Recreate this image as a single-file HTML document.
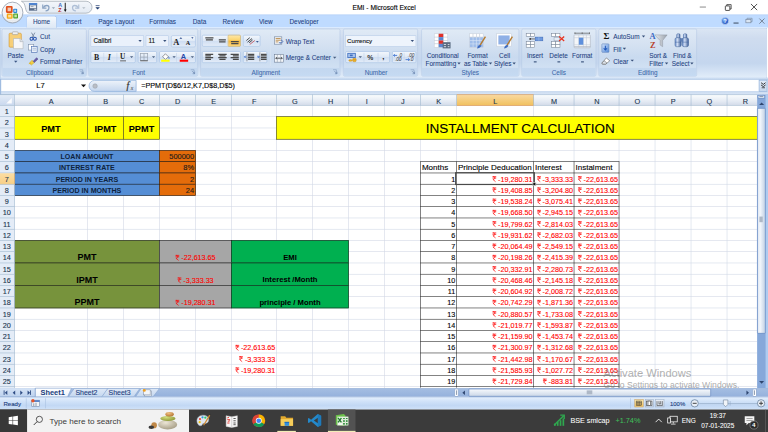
<!DOCTYPE html><html><head><meta charset="utf-8"><style>
html,body{margin:0;padding:0;width:768px;height:432px;overflow:hidden;background:#fff}
#root{position:absolute;left:0;top:0;width:1366px;height:768px;transform:scale(0.5625);transform-origin:0 0;overflow:hidden;font-family:"Liberation Sans",sans-serif;background:#fff}
#root div{position:absolute;box-sizing:border-box;white-space:nowrap;-webkit-text-stroke:0.2px currentColor}
#root svg{position:absolute;overflow:visible}
#root div[style*="bold"]{-webkit-text-stroke:0.05px currentColor}
.rl{font-size:11.4px;color:#1e3e80;-webkit-text-stroke:0.12px currentColor!important}
.tab{-webkit-text-stroke:0.12px currentColor!important;font-size:11.4px;color:#1e3e80;top:32px;height:16px;line-height:16px}
.grp{border:1px solid #b6cae6;border-radius:3px;background:linear-gradient(#e0eaf6 0%,#d4e1f1 35%,#c9daef 60%,#d6e5f6 100%)}
.glab{-webkit-text-stroke:0.12px currentColor!important;font-size:11.4px;color:#3e6aaa;text-align:center;height:16px;line-height:16px}
.gband{background:linear-gradient(#c3d7ef,#c5daf2);border-top:1px solid #c9dcf2}
.cell{font-size:14.3px;color:#000;height:20px;line-height:20px}
.rs{position:relative!important;display:inline-block;width:8.1px;height:10px;vertical-align:-0.3px;margin-right:3.2px}
.red{color:#ff0000;font-size:13.7px!important;transform:scaleX(0.934);transform-origin:100% 50%}
.sx{font-size:13.7px!important;transform:scaleX(0.934);transform-origin:100% 50%}
.btn{border:1px solid #aac4e6;border-radius:3px;background:linear-gradient(#f3f7fc,#dde8f6 50%,#d0def2 51%,#e3ecf8)}
.combo{border:1px solid #b3c9e6;background:#eaf1fb}
</style></head><body><div id="root">
<div style="left:0px;top:0px;width:1366px;height:26px;background:#fff"></div>
<div style="left:583px;top:5px;width:200px;height:17px;line-height:17px;text-align:center;font-size:11.9px;color:#000;">EMI - Microsoft Excel</div>
<div style="left:1244px;top:12px;width:11px;height:1px;background:#333"></div>
<svg style="left:1288px;top:6px" width="16" height="16"><rect x="1.5" y="4.5" width="8" height="8" rx="1" fill="none" stroke="#222" stroke-width="1.4"/><path d="M4 4.5V2.2H11.8V10H9.5" fill="none" stroke="#222" stroke-width="1.3"/></svg>
<svg style="left:1334px;top:6px" width="14" height="14"><path d="M1 1L12 12M12 1L1 12" stroke="#222" stroke-width="1.4"/></svg>
<div style="left:0px;top:26px;width:1366px;height:23px;background:#bfdbff;border-top:1px solid #b3d0f5"></div>
<svg style="left:0px;top:0px" width="190" height="30"><defs><linearGradient id="qg" x1="0" y1="0" x2="0" y2="1"><stop offset="0" stop-color="#f3f6fa"/><stop offset="1" stop-color="#e3eaf3"/></linearGradient></defs><path d="M38 2.2H153A10.6 10.6 0 0 1 153 23.4H52C48 23.4 46 19 45 13C44 7 42 4 38 2.2Z" fill="url(#qg)" stroke="#9ea6b0" stroke-width="1.3"/></svg>
<svg style="left:51px;top:5px" width="16" height="16"><rect x="0.5" y="0.5" width="14.5" height="13.5" fill="#5c6f8c"/><rect x="0.5" y="0.5" width="14.5" height="3.2" fill="#4f86d6"/><rect x="2.2" y="4.5" width="11" height="5" fill="#e9edf2"/><rect x="3.5" y="6" width="5" height="1.2" fill="#7b8797"/><rect x="10" y="10.5" width="3.5" height="2.5" fill="#c5ccd6"/></svg>
<svg style="left:72px;top:4px" width="30" height="18"><path d="M4 4V10.5H10.5" fill="none" stroke="#8aa2c2" stroke-width="2"/><path d="M5 9.5C8 4.5 15 4.5 15 9.5C15 13.5 12 15.5 9 15.5" fill="none" stroke="#8aa2c2" stroke-width="2.3"/><path d="M20 9L23 12L26 9Z" fill="#9aa8b8"/></svg>
<svg style="left:103px;top:3px" width="18" height="22"><text x="0.5" y="9.5" font-family="Liberation Sans" font-weight="bold" font-size="9.5" fill="#3a6ac0">A</text><text x="0.5" y="19" font-family="Liberation Sans" font-weight="bold" font-size="9.5" fill="#c02a2a">Z</text><path d="M13 2V15" stroke="#222" stroke-width="1.8"/><path d="M10.5 14L13 18.5L15.5 14Z" fill="#111"/></svg>
<svg style="left:126px;top:4px" width="30" height="18"><path d="M14 4V10.5H7.5" fill="none" stroke="#aebfd6" stroke-width="2"/><path d="M13 9.5C10 4.5 3 4.5 3 9.5C3 13.5 6 15.5 9 15.5" fill="none" stroke="#aebfd6" stroke-width="2.3"/><path d="M20 9L23 12L26 9Z" fill="#b3bcc6"/></svg>
<svg style="left:168px;top:8px" width="12" height="12"><path d="M2 2H9" stroke="#1e3a6e" stroke-width="1.3"/><path d="M1.5 5L5.5 9L9.5 5Z" fill="#1e3a6e"/></svg>
<svg style="left:0px;top:0px" width="48" height="48"><defs><radialGradient id="ob" cx="50%" cy="40%" r="60%"><stop offset="0" stop-color="#ffffff"/><stop offset="0.75" stop-color="#eef1f5"/><stop offset="1" stop-color="#c3cad4"/></radialGradient></defs>
<circle cx="22.2" cy="22.4" r="18.6" fill="url(#ob)" stroke="#a0a9b5" stroke-width="1.6"/>
<circle cx="22.2" cy="22.4" r="16.2" fill="none" stroke="#ffffff" stroke-width="1.2" opacity="0.8"/>
<rect x="10.5" y="10.5" width="12" height="12.5" rx="2" fill="#e0501c"/><rect x="13.5" y="13.5" width="6" height="6.5" fill="#f3c9b4"/>
<rect x="23.5" y="15.5" width="7" height="7.5" rx="1.5" fill="#2d86d6"/><rect x="25.3" y="17.3" width="3.4" height="3.8" fill="#b9dcf7"/>
<rect x="12" y="24" width="10.5" height="9.5" rx="2" fill="#f5a816"/><rect x="14.5" y="26.5" width="5.5" height="4.5" fill="#fde0a0"/>
<rect x="23.5" y="24" width="8.5" height="8.7" rx="1.5" fill="#4fa22c"/><rect x="25.5" y="26" width="4.5" height="4.7" fill="#c4e6a8"/></svg>
<div style="left:47px;top:28px;width:54px;height:22px;border:1.2px solid #a2bce2;border-bottom:none;border-radius:4px 4px 0 0;background:linear-gradient(#f7fafd,#e9f0f9 50%,#dde8f5)"></div>
<div class="tab" style="left:23.8px;top:31.3px;width:100px;height:16px;line-height:16px;text-align:center;">Home</div>
<div class="tab" style="left:80.8px;top:31.3px;width:100px;height:16px;line-height:16px;text-align:center;">Insert</div>
<div class="tab" style="left:156.6px;top:31.3px;width:100px;height:16px;line-height:16px;text-align:center;">Page Layout</div>
<div class="tab" style="left:239.3px;top:31.3px;width:100px;height:16px;line-height:16px;text-align:center;">Formulas</div>
<div class="tab" style="left:304.7px;top:31.3px;width:100px;height:16px;line-height:16px;text-align:center;">Data</div>
<div class="tab" style="left:364.2px;top:31.3px;width:100px;height:16px;line-height:16px;text-align:center;">Review</div>
<div class="tab" style="left:422.5px;top:31.3px;width:100px;height:16px;line-height:16px;text-align:center;">View</div>
<div class="tab" style="left:490.6px;top:31.3px;width:100px;height:16px;line-height:16px;text-align:center;">Developer</div>
<svg style="left:1281px;top:29px" width="16" height="16"><defs><radialGradient id="hg" cx="40%" cy="35%" r="60%"><stop offset="0" stop-color="#8fc3ff"/><stop offset="1" stop-color="#1c4fc0"/></radialGradient></defs><circle cx="8" cy="8" r="6.5" fill="url(#hg)" stroke="#cfe0f5" stroke-width="1.2"/><text x="5" y="11.5" font-family="Liberation Sans" font-weight="bold" font-size="9" fill="#fff">?</text></svg>
<div style="left:1304px;top:40px;width:9px;height:2px;background:#4a5a70"></div>
<svg style="left:1325px;top:31px" width="14" height="12"><rect x="1" y="3.5" width="9" height="6" fill="#d9e5f3" stroke="#7b8aa0" stroke-width="1.2"/><path d="M3 3.5V1.5H12V7.5H10" fill="none" stroke="#7b8aa0" stroke-width="1.2"/></svg>
<svg style="left:1349px;top:32px" width="12" height="12"><path d="M1 1L10 10M10 1L1 10" stroke="#6d7a8c" stroke-width="1.6"/></svg>
<div style="left:0px;top:49px;width:1364px;height:91px;border:1px solid #a3bfe3;border-bottom:1.5px solid #8badd9;border-radius:3px;background:linear-gradient(#dbe6f4 0%,#cfdcef 20%,#c4d6ee 70%,#e3eefa 100%)"></div>
<div class="grp" style="left:3px;top:51px;width:151px;height:85px"></div>
<div class="gband" style="left:4px;top:120px;width:149px;height:15px;border-radius:0 0 2px 2px"></div>
<div class="glab" style="left:3px;top:121px;width:135px;">Clipboard</div>
<svg style="left:140px;top:123px" width="10" height="10"><path d="M1 1H7V7" fill="none" stroke="#7d97bd" stroke-width="1"/><path d="M3.5 3.5L8 8M8 4.5V8H4.5" fill="none" stroke="#5b78a4" stroke-width="1"/></svg>
<div class="grp" style="left:157px;top:51px;width:195px;height:85px"></div>
<div class="gband" style="left:158px;top:120px;width:193px;height:15px;border-radius:0 0 2px 2px"></div>
<div class="glab" style="left:157px;top:121px;width:179px;">Font</div>
<svg style="left:338px;top:123px" width="10" height="10"><path d="M1 1H7V7" fill="none" stroke="#7d97bd" stroke-width="1"/><path d="M3.5 3.5L8 8M8 4.5V8H4.5" fill="none" stroke="#5b78a4" stroke-width="1"/></svg>
<div class="grp" style="left:356px;top:51px;width:249px;height:85px"></div>
<div class="gband" style="left:357px;top:120px;width:247px;height:15px;border-radius:0 0 2px 2px"></div>
<div class="glab" style="left:356px;top:121px;width:233px;">Alignment</div>
<svg style="left:591px;top:123px" width="10" height="10"><path d="M1 1H7V7" fill="none" stroke="#7d97bd" stroke-width="1"/><path d="M3.5 3.5L8 8M8 4.5V8H4.5" fill="none" stroke="#5b78a4" stroke-width="1"/></svg>
<div class="grp" style="left:610px;top:51px;width:133px;height:85px"></div>
<div class="gband" style="left:611px;top:120px;width:131px;height:15px;border-radius:0 0 2px 2px"></div>
<div class="glab" style="left:610px;top:121px;width:117px;">Number</div>
<svg style="left:729px;top:123px" width="10" height="10"><path d="M1 1H7V7" fill="none" stroke="#7d97bd" stroke-width="1"/><path d="M3.5 3.5L8 8M8 4.5V8H4.5" fill="none" stroke="#5b78a4" stroke-width="1"/></svg>
<div class="grp" style="left:749px;top:51px;width:174px;height:85px"></div>
<div class="gband" style="left:750px;top:120px;width:172px;height:15px;border-radius:0 0 2px 2px"></div>
<div class="glab" style="left:749px;top:121px;width:174px;">Styles</div>
<div class="grp" style="left:927px;top:51px;width:133px;height:85px"></div>
<div class="gband" style="left:928px;top:120px;width:131px;height:15px;border-radius:0 0 2px 2px"></div>
<div class="glab" style="left:927px;top:121px;width:133px;">Cells</div>
<div class="grp" style="left:1064px;top:51px;width:175px;height:85px"></div>
<div class="gband" style="left:1065px;top:120px;width:173px;height:15px;border-radius:0 0 2px 2px"></div>
<div class="glab" style="left:1064px;top:121px;width:175px;">Editing</div>
<svg style="left:14px;top:55px" width="32" height="34"><rect x="2" y="4" width="22" height="25" rx="2" fill="#f2c464" stroke="#d29a3a"/><rect x="3.5" y="5.5" width="19" height="22" fill="#f7cf78"/><rect x="8" y="1.5" width="10" height="5" rx="1.2" fill="#f0f0f0" stroke="#9a9a9a"/>
<path d="M10 13.5H21.5L27 19V31.5H10Z" fill="#f6f7f9" stroke="#a9b0b8"/><path d="M21.5 13.5V19H27" fill="#dde1e6" stroke="#a9b0b8"/></svg>
<div class="rl" style="left:10px;top:91px;width:36px;height:16px;line-height:16px;text-align:center;">Paste</div>
<svg style="left:25px;top:108px" width="8" height="5"><path d="M0 0H6L3 3.5Z" fill="#3b5584"/></svg>
<svg style="left:52px;top:57px" width="14" height="16"><path d="M4 1L9 10M10 1L5 10" stroke="#6a7a92" stroke-width="1.4"/><circle cx="4" cy="12" r="2.6" fill="none" stroke="#2a56b0" stroke-width="1.8"/><circle cx="10" cy="12" r="2.6" fill="none" stroke="#2a56b0" stroke-width="1.8"/></svg>
<div class="rl" style="left:71px;top:57px;height:16px;line-height:16px;">Cut</div>
<svg style="left:50px;top:78px" width="18" height="16"><rect x="1" y="1" width="9" height="10" fill="#fff" stroke="#7a8ca6"/><rect x="6" y="5" width="10" height="10" fill="#e9f0fa" stroke="#3f63a8"/><path d="M8 8H14M8 11H14" stroke="#8fa6c8"/></svg>
<div class="rl" style="left:71px;top:80px;height:16px;line-height:16px;">Copy</div>
<svg style="left:50px;top:99px" width="20" height="18"><path d="M2 13.5L7 8L11 12L6 16.5Z" fill="#f2d04a" stroke="#b89a20" stroke-width="0.8"/><path d="M1 15L4 11.5L6.5 14Z" fill="#e8b820"/><path d="M9 10L15 3.5L17.5 6L11 12Z" fill="#6a5aa8" stroke="#3f3478" stroke-width="0.8"/></svg>
<div class="rl" style="left:71px;top:102px;height:16px;line-height:16px;">Format Painter</div>
<div class="combo" style="left:161px;top:63px;width:95px;height:20px"></div>
<div style="left:166px;top:65px;height:16px;line-height:16px;font-size:11.4px;color:#111">Calibri</div>
<svg style="left:246px;top:71px" width="7" height="5"><path d="M0 0H6L3 3.5Z" fill="#38507a"/></svg>
<div class="combo" style="left:259px;top:63px;width:41px;height:20px"></div>
<div style="left:264px;top:65px;height:16px;line-height:16px;font-size:11.4px;color:#111">11</div>
<svg style="left:290px;top:71px" width="7" height="5"><path d="M0 0H6L3 3.5Z" fill="#38507a"/></svg>
<div class="btn" style="left:304px;top:63px;width:44px;height:21px"></div>
<svg style="left:304px;top:63px" width="44" height="21"><text x="4" y="17" font-family="Liberation Serif" font-weight="bold" font-size="15" fill="#222">A</text><path d="M15 6L17.5 3L20 6Z" fill="#2a4a8a"/><text x="26" y="17" font-family="Liberation Serif" font-weight="bold" font-size="11" fill="#222">A</text><path d="M36 3H40L38 6Z" fill="#2a4a8a"/></svg>
<div class="btn" style="left:161px;top:91px;width:80px;height:21px"></div>
<svg style="left:161px;top:91px" width="80" height="21"><text x="6" y="15.5" font-family="Liberation Serif" font-weight="bold" font-size="14" fill="#222">B</text><text x="30.5" y="15.5" font-family="Liberation Serif" font-style="italic" font-weight="bold" font-size="14" fill="#222">I</text><text x="52.5" y="14.5" font-family="Liberation Serif" font-weight="bold" font-size="13" fill="#222">U</text><path d="M52.5 17.2H63" stroke="#222" stroke-width="1.2"/><path d="M70 9H76L73 12Z" fill="#4a5f80"/><path d="M23.4 3V19M46.8 3V19" stroke="#c2d3ea"/></svg>
<div class="btn" style="left:245px;top:91px;width:34px;height:21px"></div>
<svg style="left:245px;top:91px" width="34" height="21"><rect x="4.5" y="4" width="13" height="13" fill="none" stroke="#9aa4b2" stroke-width="1.3"/><path d="M11 4V17M4.5 10.5H17.5" stroke="#9aa4b2" stroke-width="1.3"/><path d="M4.5 17H17.5" stroke="#555" stroke-width="1.5"/><path d="M25 9H31L28 12Z" fill="#4a5f80"/></svg>
<div class="btn" style="left:283px;top:91px;width:65px;height:21px"></div>
<svg style="left:283px;top:91px" width="65" height="21"><path d="M6 10L11 4.5L16.5 10L11 14.5Z" fill="#fff" stroke="#555" stroke-width="1"/><path d="M16.5 10C18.5 11.5 18.5 13 17 13.5" fill="#4a77c5" stroke="#4a77c5"/><rect x="3.5" y="15" width="15" height="3.8" fill="#ffff00"/><path d="M23.5 9H29.5L26.5 12Z" fill="#4a5f80"/><text x="38.5" y="14.5" font-family="Liberation Sans" font-weight="bold" font-size="13" fill="#2645a8">A</text><rect x="36.5" y="15" width="15" height="3.8" fill="#ff0000"/><path d="M56 9H62L59 12Z" fill="#4a5f80"/><path d="M30.8 3V19" stroke="#c2d3ea"/></svg>
<div class="btn" style="left:359px;top:62px;width:69px;height:21px"></div>
<div style="left:405px;top:62px;width:23px;height:21px;border:1px solid #e3b24a;border-radius:2px;background:linear-gradient(#fee7a5,#fbd36c 45%,#f7b83c 50%,#fcd67e)"></div>
<div class="btn" style="left:432px;top:62px;width:31px;height:21px"></div>
<div class="btn" style="left:359px;top:91px;width:69px;height:21px"></div>
<div class="btn" style="left:432px;top:91px;width:43px;height:21px"></div>
<svg style="left:0px;top:0px" width="480" height="120"><g stroke="#4a4a4a" stroke-width="2.3" fill="none">
<path d="M365 67.5H379.5M366 71H378.5"/>
<path d="M389 71H401.5M389.5 74.5H401"/>
<path d="M410.5 74H424.5M411 77.5H424"/>
<path d="M365 96.5H379M365 99.5H375M365 102.5H379M365 105.5H375"/>
<path d="M388 96.5H403M390 99.5H401M388 102.5H403M390 105.5H401"/>
<path d="M410 96.5H424.5M414 99.5H424.5M410 102.5H424.5M414 105.5H424.5"/>
<path d="M441 96.5H452M441 99.5H452M441 102.5H452M441 105.5H452"/>
<path d="M464 96.5H474M464 99.5H474M464 102.5H474M464 105.5H474"/>
</g>
<path d="M439 93V109M462 93V109" stroke="#555" stroke-width="1"/>
<path d="M434.5 101H438M436.5 99L434.5 101L436.5 103" stroke="#3a6fd0" stroke-width="1.4" fill="none"/>
<path d="M457 101H461M459 99L461 101L459 103" stroke="#3a6fd0" stroke-width="1.4" fill="none"/>
<g stroke="#3a3a3a" stroke-width="1.6" fill="none"><path d="M438 72L444 67M440 75L448 68.5M443 76L449 71"/></g>
<path d="M444 79L453 72" stroke="#c03030" stroke-width="1.2"/>
<path d="M455 73H460L457.5 76Z" fill="#3a5a90"/>
</svg>
<div style="left:480px;top:60px;width:1.2px;height:58px;background:#a3bbdb;border-right:1px solid #eef4fb"></div>
<svg style="left:487px;top:64px" width="20" height="18"><rect x="1" y="1.5" width="13" height="13" fill="#f4f6f9" stroke="#6a7a92"/><path d="M3 4.5H12M3 7.5H12M3 10.5H8" stroke="#b98a4a" stroke-width="1.6"/><path d="M12 7.5C17 7.5 17 12 12.5 12H10M11.5 10.5L10 12L11.5 13.5" fill="none" stroke="#2a56b0" stroke-width="1.2"/></svg>
<div class="rl" style="left:508px;top:66px;height:16px;line-height:16px;">Wrap Text</div>
<svg style="left:487px;top:95px" width="20" height="18"><rect x="1" y="1.5" width="16" height="14" fill="#f4f6f9" stroke="#6a7a92"/><path d="M1 8.5H17M6 1.5V15.5M12 1.5V15.5" stroke="#8a98aa"/><rect x="3" y="6" width="12" height="5" fill="#dfe6ef"/><path d="M3.5 8.5H14.5M3.5 8.5L5.5 6.5M3.5 8.5L5.5 10.5M14.5 8.5L12.5 6.5M14.5 8.5L12.5 10.5" stroke="#222" stroke-width="1.2" fill="none"/></svg>
<div class="rl" style="left:508px;top:95px;height:16px;line-height:16px;">Merge &amp; Center</div>
<svg style="left:592px;top:101px" width="7" height="5"><path d="M0 0H6L3 3.5Z" fill="#4a5f80"/></svg>
<div class="combo" style="left:614px;top:63px;width:126px;height:20px;background:#eef4fc"></div>
<div style="left:617px;top:65px;height:16px;line-height:16px;font-size:11px;color:#111">Currency</div>
<svg style="left:730px;top:71px" width="7" height="5"><path d="M0 0H6L3 3.5Z" fill="#38507a"/></svg>
<div class="btn" style="left:614px;top:91px;width:79px;height:21px"></div>
<svg style="left:614px;top:91px" width="79" height="21"><rect x="3.5" y="3" width="15" height="9" fill="#3f6fc0"/><rect x="5" y="4.5" width="12" height="6" fill="#a9c4ee"/><rect x="8" y="6" width="5" height="3" fill="#3f6fc0"/><ellipse cx="16" cy="14.5" rx="3.5" ry="1.8" fill="#f0b428" stroke="#b07810" stroke-width="0.6"/><ellipse cx="16" cy="17" rx="3.5" ry="1.8" fill="#f0b428" stroke="#b07810" stroke-width="0.6"/><ellipse cx="9" cy="16.5" rx="3" ry="1.6" fill="#f0b428" stroke="#b07810" stroke-width="0.6"/><path d="M23.5 9H29.5L26.5 12Z" fill="#4a5f80"/><path d="M33 3V19M58 3V19" stroke="#c2d3ea"/><text x="39" y="15.5" font-family="Liberation Sans" font-weight="bold" font-size="12" fill="#333">%</text><text x="65.5" y="13" font-family="Liberation Sans" font-weight="bold" font-size="14" fill="#222">,</text></svg>
<div class="btn" style="left:697px;top:91px;width:43px;height:21px"></div>
<svg style="left:697px;top:91px" width="43" height="21"><path d="M2.5 7.5H9M5 5.5L2.5 7.5L5 9.5" stroke="#3a6fd0" stroke-width="1.5" fill="none"/><text x="5" y="17.5" font-family="Liberation Sans" font-style="italic" font-size="8.5" fill="#333">.00</text><text x="11" y="10.5" font-family="Liberation Sans" font-style="italic" font-size="8.5" fill="#333">.0</text><path d="M21.5 3V19" stroke="#c2d3ea"/><text x="28" y="10.5" font-family="Liberation Sans" font-style="italic" font-size="8.5" fill="#333">.00</text><path d="M24 15H31M28.5 13L31 15L28.5 17" stroke="#3a6fd0" stroke-width="1.5" fill="none"/><text x="31" y="18" font-family="Liberation Sans" font-style="italic" font-size="8.5" fill="#333">.0</text></svg>
<svg style="left:771px;top:59px" width="34" height="30"><g stroke="#c8d0dc" fill="#fff"><rect x="1" y="1" width="8" height="6"/><rect x="9" y="1" width="8" height="6"/><rect x="17" y="1" width="8" height="6"/><rect x="1" y="7" width="8" height="6"/><rect x="9" y="7" width="8" height="6"/><rect x="17" y="7" width="8" height="6"/><rect x="1" y="13" width="8" height="6"/><rect x="9" y="13" width="8" height="6"/><rect x="17" y="13" width="8" height="6"/><rect x="1" y="19" width="8" height="6"/><rect x="9" y="19" width="8" height="6"/></g><rect x="9" y="1" width="8" height="6" fill="#e0302a"/><rect x="9" y="7" width="8" height="6" fill="#5b86d0"/><rect x="9" y="13" width="8" height="6" fill="#e0302a"/><rect x="9" y="19" width="8" height="6" fill="#5b86d0"/><rect x="16" y="16" width="14" height="11" fill="#5a6a80"/><path d="M18 20H22M25 20H28M18 24H22M25 24H28" stroke="#e8edf4" stroke-width="1.5"/></svg>
<div class="rl" style="left:742px;top:92px;width:90px;height:15px;line-height:15px;text-align:center;">Conditional</div>
<div class="rl" style="left:742px;top:106px;width:90px;height:15px;line-height:15px;text-align:center;">Formatting&nbsp;&nbsp;</div>
<svg style="left:834px;top:59px" width="34" height="30"><g stroke="#c8d0dc" fill="#dbe6f6"><rect x="1" y="1" width="6" height="6" fill="#fff"/><rect x="7" y="1" width="6" height="6" fill="#fff"/><rect x="13" y="1" width="6" height="6" fill="#fff"/><rect x="19" y="1" width="6" height="6" fill="#fff"/><rect x="1" y="7" width="24" height="18" fill="#9fbdea"/></g><path d="M1 13H25M1 19H25M7 7V25M13 7V25M19 7V25" stroke="#dbe6f6"/><path d="M19 22L29 6" stroke="#b57b30" stroke-width="2.5"/><path d="M14 27C16 21 19 20 22 22C20 26 17 27 14 27Z" fill="#3e6bbf"/></svg>
<div class="rl" style="left:804px;top:92px;width:90px;height:15px;line-height:15px;text-align:center;">Format</div>
<div class="rl" style="left:804px;top:106px;width:90px;height:15px;line-height:15px;text-align:center;">as Table&nbsp;&nbsp;</div>
<svg style="left:882px;top:59px" width="34" height="30"><rect x="1" y="1" width="26" height="22" fill="#fff" stroke="#c8d0dc"/><rect x="4" y="4" width="20" height="16" fill="#8fb0e6"/><path d="M19 22L29 6" stroke="#b57b30" stroke-width="2.5"/><path d="M14 27C16 21 19 20 22 22C20 26 17 27 14 27Z" fill="#3e6bbf"/></svg>
<div class="rl" style="left:852px;top:92px;width:90px;height:15px;line-height:15px;text-align:center;">Cell</div>
<div class="rl" style="left:852px;top:106px;width:90px;height:15px;line-height:15px;text-align:center;">Styles&nbsp;&nbsp;</div>
<svg style="left:813px;top:111px" width="7" height="5"><path d="M0 0H6L3 3.5Z" fill="#38507a"/></svg>
<svg style="left:869px;top:111px" width="7" height="5"><path d="M0 0H6L3 3.5Z" fill="#38507a"/></svg>
<svg style="left:911px;top:111px" width="7" height="5"><path d="M0 0H6L3 3.5Z" fill="#38507a"/></svg>
<svg style="left:934px;top:58px" width="34" height="28"><g fill="#fff" stroke="#7b8798" stroke-width="1"><rect x="1.5" y="1.5" width="7.5" height="5"/><rect x="9" y="1.5" width="7.5" height="5"/><rect x="1.5" y="16" width="7.5" height="5"/><rect x="9" y="16" width="7.5" height="5"/><rect x="1.5" y="21" width="7.5" height="5"/><rect x="9" y="21" width="7.5" height="5"/></g><rect x="17.5" y="8" width="13.5" height="6.5" fill="#6f9be0" stroke="#3f6bb8"/><path d="M24 8V14.5" stroke="#a8c4ee"/><path d="M8 11.2H17" stroke="#333" stroke-width="1.2"/><circle cx="8.5" cy="11.2" r="1.6" fill="#333"/></svg>
<div class="rl" style="left:911px;top:92px;width:80px;height:15px;line-height:15px;text-align:center;">Insert</div>
<svg style="left:979px;top:58px" width="30" height="28"><g fill="#fff" stroke="#7b8798" stroke-width="1"><rect x="1.5" y="1.5" width="7.5" height="5"/><rect x="9" y="1.5" width="7.5" height="5"/><rect x="1.5" y="16" width="7.5" height="5"/><rect x="9" y="16" width="7.5" height="5"/><rect x="1.5" y="21" width="7.5" height="5"/><rect x="9" y="21" width="7.5" height="5"/></g><rect x="6" y="8.5" width="10" height="6" fill="#e8eef6" stroke="#9aa8ba"/><path d="M15 7L24 15M24 7L15 15" stroke="#e8321e" stroke-width="2.2"/></svg>
<div class="rl" style="left:953px;top:92px;width:80px;height:15px;line-height:15px;text-align:center;">Delete</div>
<svg style="left:1018px;top:56px" width="36" height="32"><path d="M4 3H30M4 1.5V4.5M17 1.5V4.5M30 1.5V4.5" stroke="#444" stroke-width="1.1"/><rect x="2.5" y="6" width="29" height="23" rx="1.5" fill="#f4f6f9" stroke="#a9b2be"/><path d="M11 6V29M19 6V29M24.5 6V29M2.5 11H31.5M2.5 23.5H31.5" stroke="#c5ccd6"/><rect x="11" y="11" width="8" height="12.5" fill="#5e8fdc"/><path d="M2.5 27H31.5" stroke="#b0b8c4" stroke-width="1.5"/></svg>
<div class="rl" style="left:995px;top:92px;width:80px;height:15px;line-height:15px;text-align:center;">Format</div>
<svg style="left:949px;top:109px" width="6" height="3"><rect x="0" y="0" width="5" height="2" fill="#38507a"/></svg>
<svg style="left:991px;top:109px" width="6" height="3"><rect x="0" y="0" width="5" height="2" fill="#38507a"/></svg>
<svg style="left:1033px;top:109px" width="6" height="3"><rect x="0" y="0" width="5" height="2" fill="#38507a"/></svg>
<div style="left:1073px;top:55px;height:18px;line-height:18px;font-size:16px;color:#111;font-weight:bold;font-family:&quot;Liberation Serif&quot;,serif">&Sigma;</div>
<div class="rl" style="left:1090px;top:57px;height:16px;line-height:16px;">AutoSum</div>
<svg style="left:1141px;top:63px" width="7" height="5"><path d="M0 0H6L3 3.5Z" fill="#38507a"/></svg>
<svg style="left:1069px;top:77px" width="16" height="18"><defs><linearGradient id="fl" x1="0" y1="0" x2="1" y2="1"><stop offset="0" stop-color="#d6e6fb"/><stop offset="1" stop-color="#4f86d8"/></linearGradient></defs><rect x="1" y="1" width="12.5" height="15" rx="1" fill="url(#fl)" stroke="#5b7fb8"/><path d="M7.2 4.5V11.5M4.2 8.8L7.2 12L10.2 8.8" stroke="#1f56b8" stroke-width="1.8" fill="none"/></svg>
<div class="rl" style="left:1090px;top:80px;height:16px;line-height:16px;">Fill</div>
<svg style="left:1107px;top:85px" width="7" height="5"><path d="M0 0H6L3 3.5Z" fill="#38507a"/></svg>
<svg style="left:1068px;top:99px" width="18" height="16"><path d="M2 13L10 4L16 9L9 15H3Z" fill="#fff" stroke="#666" stroke-width="1.1"/><path d="M2 13L6 9L11 13L9 15H3Z" fill="#dde3ea" stroke="#666" stroke-width="1.1"/></svg>
<div class="rl" style="left:1090px;top:102px;height:16px;line-height:16px;">Clear</div>
<svg style="left:1121px;top:106px" width="7" height="5"><path d="M0 0H6L3 3.5Z" fill="#38507a"/></svg>
<svg style="left:1154px;top:56px" width="36" height="32"><defs><linearGradient id="fu" x1="0" y1="0" x2="1" y2="0"><stop offset="0" stop-color="#e9ecf0"/><stop offset="1" stop-color="#9aa2ac"/></linearGradient></defs><path d="M10 6H32L24 16V27L19.5 24V16Z" fill="url(#fu)" stroke="#8a929c" stroke-width="0.8"/><text x="0.5" y="13.5" font-family="Liberation Serif" font-weight="bold" font-size="15" fill="#3f6ac2">A</text><text x="1.5" y="29" font-family="Liberation Serif" font-weight="bold" font-size="15" fill="#b8422e">Z</text></svg>
<div class="rl" style="left:1125px;top:92px;width:90px;height:15px;line-height:15px;text-align:center;">Sort &amp;</div>
<div class="rl" style="left:1125px;top:106px;width:90px;height:15px;line-height:15px;text-align:center;">Filter&nbsp;&nbsp;</div>
<svg style="left:1198px;top:56px" width="32" height="30"><defs><linearGradient id="bn" x1="0" y1="0" x2="1" y2="0"><stop offset="0" stop-color="#6f92cc"/><stop offset="0.4" stop-color="#cfdcf2"/><stop offset="1" stop-color="#3a5c96"/></linearGradient></defs><rect x="5" y="4" width="6" height="8" rx="2" fill="url(#bn)" stroke="#3d5f98" stroke-width="0.8"/><rect x="17" y="4" width="6" height="8" rx="2" fill="url(#bn)" stroke="#3d5f98" stroke-width="0.8"/><rect x="2" y="11" width="11" height="16" rx="3" fill="url(#bn)" stroke="#3d5f98" stroke-width="0.9"/><rect x="15" y="11" width="11" height="16" rx="3" fill="url(#bn)" stroke="#3d5f98" stroke-width="0.9"/><rect x="11.5" y="12" width="5" height="6" fill="#5f7fb4"/><path d="M2 19H13M15 19H26" stroke="#3d5f98" stroke-width="0.8"/></svg>
<div class="rl" style="left:1168px;top:92px;width:90px;height:15px;line-height:15px;text-align:center;">Find &amp;</div>
<div class="rl" style="left:1168px;top:106px;width:90px;height:15px;line-height:15px;text-align:center;">Select&nbsp;&nbsp;</div>
<svg style="left:1182px;top:111px" width="7" height="5"><path d="M0 0H6L3 3.5Z" fill="#38507a"/></svg>
<svg style="left:1227px;top:111px" width="7" height="5"><path d="M0 0H6L3 3.5Z" fill="#38507a"/></svg>
<div style="left:0px;top:138px;width:1366px;height:30px;background:linear-gradient(#c9dbf1,#d6e4f5)"></div>
<div style="left:0px;top:141px;width:1366px;height:1px;background:#a9c3e4"></div>
<div style="left:2px;top:142px;width:1347px;height:20px;background:#fff"></div>
<div style="left:0px;top:162px;width:1366px;height:6px;background:linear-gradient(#c8d9ef,#d9e6f6)"></div>
<div style="left:0px;top:140px;width:2px;height:28px;background:#a0bce0"></div>
<div style="left:52px;top:143px;width:40px;height:19px;line-height:19px;text-align:center;font-size:13.5px;color:#000">L7</div>
<svg style="left:144px;top:150px" width="10" height="7"><path d="M0 0H9L4.5 5Z" fill="#111"/></svg>
<svg style="left:157px;top:142px" width="88" height="22"><defs><linearGradient id="pg" x1="0" y1="0" x2="0" y2="1"><stop offset="0" stop-color="#eef3fa"/><stop offset="1" stop-color="#c4d6ee"/></linearGradient></defs><path d="M11 1H85V20.5H11A9.75 9.75 0 0 1 11 1Z" fill="url(#pg)" stroke="#8aaedb" stroke-width="1.2"/><circle cx="12" cy="11" r="4" fill="#b9bec6" stroke="#8f96a0" stroke-width="0.8"/><text x="68" y="16.5" font-family="Liberation Serif" font-style="italic" font-size="17" fill="#333" stroke="#333" stroke-width="0.4">f</text><text x="75.5" y="17.5" font-family="Liberation Serif" font-style="italic" font-size="10" fill="#3a3a3a">x</text></svg>
<div style="left:251px;top:143px;height:19px;line-height:19px;font-size:12.84px;color:#000">=PPMT(D$6/12,K7,D$8,D$5)</div>
<div style="left:1349px;top:142px;width:15px;height:21px;border:1px solid #8eaed8;background:linear-gradient(#e3ecf8,#c7d8ee)"></div>
<svg style="left:1351px;top:145px" width="12" height="14"><path d="M2 2L6 5L10 2M2 6L6 9L10 6" fill="none" stroke="#222" stroke-width="1.6"/><path d="M3 11H9" stroke="#222" stroke-width="1.3"/></svg>
<div style="left:0px;top:188px;width:1346px;height:502px;background:#fff"></div>
<div style="left:0px;top:168px;width:1346px;height:20px;background:linear-gradient(#f9fcfd,#e5ebf4 60%,#d3dbe9);border-bottom:1px solid #9eb6ce;border-top:1px solid #9eb6ce"></div>
<div style="left:812px;top:168px;width:137px;height:20px;background:linear-gradient(#f9d99f,#f1c15f);border-bottom:1px solid #f29536;border-top:1px solid #f29536"></div>
<div style="left:0px;top:168px;width:26px;height:20px;background:linear-gradient(#e4ecf7,#c9d8ee);border-right:1px solid #9eb6ce;border-bottom:1px solid #9eb6ce;border-top:1px solid #9eb6ce"></div>
<svg style="left:8px;top:173px" width="14" height="12"><path d="M13 1V11H3Z" fill="#fff" opacity="0.9"/></svg>
<div style="left:155px;top:168px;width:1px;height:20px;background:#9eb6ce"></div>
<div style="left:26px;top:169.5px;width:130px;height:20px;line-height:20px;text-align:center;font-size:13px;color:#22364f;-webkit-text-stroke:0.2px currentColor">A</div>
<div style="left:219px;top:168px;width:1px;height:20px;background:#9eb6ce"></div>
<div style="left:156px;top:169.5px;width:64px;height:20px;line-height:20px;text-align:center;font-size:13px;color:#22364f;-webkit-text-stroke:0.2px currentColor">B</div>
<div style="left:283px;top:168px;width:1px;height:20px;background:#9eb6ce"></div>
<div style="left:220px;top:169.5px;width:64px;height:20px;line-height:20px;text-align:center;font-size:13px;color:#22364f;-webkit-text-stroke:0.2px currentColor">C</div>
<div style="left:347px;top:168px;width:1px;height:20px;background:#9eb6ce"></div>
<div style="left:284px;top:169.5px;width:64px;height:20px;line-height:20px;text-align:center;font-size:13px;color:#22364f;-webkit-text-stroke:0.2px currentColor">D</div>
<div style="left:411px;top:168px;width:1px;height:20px;background:#9eb6ce"></div>
<div style="left:348px;top:169.5px;width:64px;height:20px;line-height:20px;text-align:center;font-size:13px;color:#22364f;-webkit-text-stroke:0.2px currentColor">E</div>
<div style="left:491px;top:168px;width:1px;height:20px;background:#9eb6ce"></div>
<div style="left:412px;top:169.5px;width:80px;height:20px;line-height:20px;text-align:center;font-size:13px;color:#22364f;-webkit-text-stroke:0.2px currentColor">F</div>
<div style="left:555px;top:168px;width:1px;height:20px;background:#9eb6ce"></div>
<div style="left:492px;top:169.5px;width:64px;height:20px;line-height:20px;text-align:center;font-size:13px;color:#22364f;-webkit-text-stroke:0.2px currentColor">G</div>
<div style="left:619px;top:168px;width:1px;height:20px;background:#9eb6ce"></div>
<div style="left:556px;top:169.5px;width:64px;height:20px;line-height:20px;text-align:center;font-size:13px;color:#22364f;-webkit-text-stroke:0.2px currentColor">H</div>
<div style="left:683px;top:168px;width:1px;height:20px;background:#9eb6ce"></div>
<div style="left:620px;top:169.5px;width:64px;height:20px;line-height:20px;text-align:center;font-size:13px;color:#22364f;-webkit-text-stroke:0.2px currentColor">I</div>
<div style="left:747px;top:168px;width:1px;height:20px;background:#9eb6ce"></div>
<div style="left:684px;top:169.5px;width:64px;height:20px;line-height:20px;text-align:center;font-size:13px;color:#22364f;-webkit-text-stroke:0.2px currentColor">J</div>
<div style="left:811px;top:168px;width:1px;height:20px;background:#9eb6ce"></div>
<div style="left:748px;top:169.5px;width:64px;height:20px;line-height:20px;text-align:center;font-size:13px;color:#22364f;-webkit-text-stroke:0.2px currentColor">K</div>
<div style="left:948px;top:168px;width:1px;height:20px;background:#9eb6ce"></div>
<div style="left:812px;top:169.5px;width:137px;height:20px;line-height:20px;text-align:center;font-size:13px;color:#22364f;-webkit-text-stroke:0.2px currentColor">L</div>
<div style="left:1020px;top:168px;width:1px;height:20px;background:#9eb6ce"></div>
<div style="left:949px;top:169.5px;width:72px;height:20px;line-height:20px;text-align:center;font-size:13px;color:#22364f;-webkit-text-stroke:0.2px currentColor">M</div>
<div style="left:1100px;top:168px;width:1px;height:20px;background:#9eb6ce"></div>
<div style="left:1021px;top:169.5px;width:80px;height:20px;line-height:20px;text-align:center;font-size:13px;color:#22364f;-webkit-text-stroke:0.2px currentColor">N</div>
<div style="left:1164px;top:168px;width:1px;height:20px;background:#9eb6ce"></div>
<div style="left:1101px;top:169.5px;width:64px;height:20px;line-height:20px;text-align:center;font-size:13px;color:#22364f;-webkit-text-stroke:0.2px currentColor">O</div>
<div style="left:1228px;top:168px;width:1px;height:20px;background:#9eb6ce"></div>
<div style="left:1165px;top:169.5px;width:64px;height:20px;line-height:20px;text-align:center;font-size:13px;color:#22364f;-webkit-text-stroke:0.2px currentColor">P</div>
<div style="left:1292px;top:168px;width:1px;height:20px;background:#9eb6ce"></div>
<div style="left:1229px;top:169.5px;width:64px;height:20px;line-height:20px;text-align:center;font-size:13px;color:#22364f;-webkit-text-stroke:0.2px currentColor">Q</div>
<div style="left:1356px;top:168px;width:1px;height:20px;background:#9eb6ce"></div>
<div style="left:1293px;top:169.5px;width:64px;height:20px;line-height:20px;text-align:center;font-size:13px;color:#22364f;-webkit-text-stroke:0.2px currentColor">R</div>
<div style="left:155px;top:188px;width:1px;height:502px;background:#d0d7e5"></div>
<div style="left:219px;top:188px;width:1px;height:502px;background:#d0d7e5"></div>
<div style="left:283px;top:188px;width:1px;height:502px;background:#d0d7e5"></div>
<div style="left:347px;top:188px;width:1px;height:502px;background:#d0d7e5"></div>
<div style="left:411px;top:188px;width:1px;height:502px;background:#d0d7e5"></div>
<div style="left:491px;top:188px;width:1px;height:502px;background:#d0d7e5"></div>
<div style="left:555px;top:188px;width:1px;height:502px;background:#d0d7e5"></div>
<div style="left:619px;top:188px;width:1px;height:502px;background:#d0d7e5"></div>
<div style="left:683px;top:188px;width:1px;height:502px;background:#d0d7e5"></div>
<div style="left:747px;top:188px;width:1px;height:502px;background:#d0d7e5"></div>
<div style="left:811px;top:188px;width:1px;height:502px;background:#d0d7e5"></div>
<div style="left:948px;top:188px;width:1px;height:502px;background:#d0d7e5"></div>
<div style="left:1020px;top:188px;width:1px;height:502px;background:#d0d7e5"></div>
<div style="left:1100px;top:188px;width:1px;height:502px;background:#d0d7e5"></div>
<div style="left:1164px;top:188px;width:1px;height:502px;background:#d0d7e5"></div>
<div style="left:1228px;top:188px;width:1px;height:502px;background:#d0d7e5"></div>
<div style="left:1292px;top:188px;width:1px;height:502px;background:#d0d7e5"></div>
<div style="left:26px;top:207px;width:1320px;height:1px;background:#d0d7e5"></div>
<div style="left:26px;top:227px;width:1320px;height:1px;background:#d0d7e5"></div>
<div style="left:26px;top:247px;width:1320px;height:1px;background:#d0d7e5"></div>
<div style="left:26px;top:267px;width:1320px;height:1px;background:#d0d7e5"></div>
<div style="left:26px;top:287px;width:1320px;height:1px;background:#d0d7e5"></div>
<div style="left:26px;top:307px;width:1320px;height:1px;background:#d0d7e5"></div>
<div style="left:26px;top:327px;width:1320px;height:1px;background:#d0d7e5"></div>
<div style="left:26px;top:347px;width:1320px;height:1px;background:#d0d7e5"></div>
<div style="left:26px;top:367px;width:1320px;height:1px;background:#d0d7e5"></div>
<div style="left:26px;top:387px;width:1320px;height:1px;background:#d0d7e5"></div>
<div style="left:26px;top:407px;width:1320px;height:1px;background:#d0d7e5"></div>
<div style="left:26px;top:427px;width:1320px;height:1px;background:#d0d7e5"></div>
<div style="left:26px;top:447px;width:1320px;height:1px;background:#d0d7e5"></div>
<div style="left:26px;top:467px;width:1320px;height:1px;background:#d0d7e5"></div>
<div style="left:26px;top:487px;width:1320px;height:1px;background:#d0d7e5"></div>
<div style="left:26px;top:507px;width:1320px;height:1px;background:#d0d7e5"></div>
<div style="left:26px;top:527px;width:1320px;height:1px;background:#d0d7e5"></div>
<div style="left:26px;top:547px;width:1320px;height:1px;background:#d0d7e5"></div>
<div style="left:26px;top:567px;width:1320px;height:1px;background:#d0d7e5"></div>
<div style="left:26px;top:587px;width:1320px;height:1px;background:#d0d7e5"></div>
<div style="left:26px;top:607px;width:1320px;height:1px;background:#d0d7e5"></div>
<div style="left:26px;top:627px;width:1320px;height:1px;background:#d0d7e5"></div>
<div style="left:26px;top:647px;width:1320px;height:1px;background:#d0d7e5"></div>
<div style="left:26px;top:667px;width:1320px;height:1px;background:#d0d7e5"></div>
<div style="left:26px;top:687px;width:1320px;height:1px;background:#d0d7e5"></div>
<div style="left:25px;top:207px;width:131px;height:41px;background:#ffff00;border:1px solid #333"></div>
<div style="left:25px;top:208.5px;width:131px;height:41px;line-height:41px;text-align:center;font-size:16.4px;font-weight:bold;color:#000">PMT</div>
<div style="left:155px;top:207px;width:65px;height:41px;background:#ffff00;border:1px solid #333"></div>
<div style="left:155px;top:208.5px;width:65px;height:41px;line-height:41px;text-align:center;font-size:16.4px;font-weight:bold;color:#000">IPMT</div>
<div style="left:219px;top:207px;width:65px;height:41px;background:#ffff00;border:1px solid #333"></div>
<div style="left:219px;top:208.5px;width:65px;height:41px;line-height:41px;text-align:center;font-size:16.4px;font-weight:bold;color:#000">PPMT</div>
<div style="left:25px;top:267px;width:259px;height:21px;background:#558ed5;border:1.6px solid #1a1a1a"></div>
<div style="left:25px;top:268px;width:259px;height:23px;line-height:23px;text-align:center;font-size:12.6px;font-weight:bold;color:#0f243e">LOAN AMOUNT</div>
<div style="left:25px;top:287px;width:259px;height:21px;background:#558ed5;border:1.6px solid #1a1a1a"></div>
<div style="left:25px;top:288px;width:259px;height:23px;line-height:23px;text-align:center;font-size:12.6px;font-weight:bold;color:#0f243e">INTEREST RATE</div>
<div style="left:25px;top:307px;width:259px;height:21px;background:#558ed5;border:1.6px solid #1a1a1a"></div>
<div style="left:25px;top:308px;width:259px;height:23px;line-height:23px;text-align:center;font-size:12.6px;font-weight:bold;color:#0f243e">PERIOD IN YEARS</div>
<div style="left:25px;top:327px;width:259px;height:21px;background:#558ed5;border:1.6px solid #1a1a1a"></div>
<div style="left:25px;top:328px;width:259px;height:23px;line-height:23px;text-align:center;font-size:12.6px;font-weight:bold;color:#0f243e">PERIOD IN MONTHS</div>
<div style="left:283px;top:267px;width:65px;height:21px;background:#e46c0a;border:1.6px solid #1a1a1a"></div>
<div style="left:283px;top:268px;width:62px;height:21px;line-height:21px;text-align:right;font-size:13.2px;color:#1a1a1a">500000</div>
<div style="left:283px;top:287px;width:65px;height:21px;background:#e46c0a;border:1.6px solid #1a1a1a"></div>
<div style="left:283px;top:288px;width:62px;height:21px;line-height:21px;text-align:right;font-size:13.2px;color:#1a1a1a">8%</div>
<div style="left:283px;top:307px;width:65px;height:21px;background:#e46c0a;border:1.6px solid #1a1a1a"></div>
<div style="left:283px;top:308px;width:62px;height:21px;line-height:21px;text-align:right;font-size:13.2px;color:#1a1a1a">2</div>
<div style="left:283px;top:327px;width:65px;height:21px;background:#e46c0a;border:1.6px solid #1a1a1a"></div>
<div style="left:283px;top:328px;width:62px;height:21px;line-height:21px;text-align:right;font-size:13.2px;color:#1a1a1a">24</div>
<div style="left:491px;top:207px;width:855px;height:41px;background:#ffff00;border:1px solid #333;border-right:none"></div>
<div style="left:757px;top:208px;height:40px;line-height:40px;font-size:24px;color:#000">INSTALLMENT CALCULATION</div>
<div style="left:25px;top:427px;width:259px;height:41px;background:#77933c;border:1.6px solid #1a1a1a"></div>
<div style="left:25px;top:448px;width:259px;height:20px;line-height:20px;text-align:center;font-size:16px;font-weight:bold;color:#000">PMT</div>
<div style="left:25px;top:467px;width:259px;height:41px;background:#77933c;border:1.6px solid #1a1a1a"></div>
<div style="left:25px;top:488px;width:259px;height:20px;line-height:20px;text-align:center;font-size:16px;font-weight:bold;color:#000">IPMT</div>
<div style="left:25px;top:507px;width:259px;height:41px;background:#77933c;border:1.6px solid #1a1a1a"></div>
<div style="left:25px;top:528px;width:259px;height:20px;line-height:20px;text-align:center;font-size:16px;font-weight:bold;color:#000">PPMT</div>
<div style="left:283px;top:427px;width:129px;height:41px;background:#a6a6a6;border:1.6px solid #1a1a1a"></div>
<div class="red" style="left:283px;top:448.5px;width:129px;height:20px;line-height:20px;text-align:center;transform-origin:50% 50%"><svg class="rs" viewBox="0 0 8 10"><path d="M0.4 1H7.6M0.4 3.5H7.6M1.8 1C6 1 6 6 1.8 6H1.3L6.3 10" fill="none" stroke="currentColor" stroke-width="1.3"/></svg>-22,613.65</div>
<div style="left:411px;top:427px;width:209px;height:41px;background:#00b050;border:1.6px solid #1a1a1a"></div>
<div style="left:411px;top:448px;width:209px;height:20px;line-height:20px;text-align:center;font-size:13.6px;font-weight:bold;color:#000">EMI</div>
<div style="left:283px;top:467px;width:129px;height:41px;background:#a6a6a6;border:1.6px solid #1a1a1a"></div>
<div class="red" style="left:283px;top:488.5px;width:129px;height:20px;line-height:20px;text-align:center;transform-origin:50% 50%"><svg class="rs" viewBox="0 0 8 10"><path d="M0.4 1H7.6M0.4 3.5H7.6M1.8 1C6 1 6 6 1.8 6H1.3L6.3 10" fill="none" stroke="currentColor" stroke-width="1.3"/></svg>-3,333.33</div>
<div style="left:411px;top:467px;width:209px;height:41px;background:#00b050;border:1.6px solid #1a1a1a"></div>
<div style="left:411px;top:488px;width:209px;height:20px;line-height:20px;text-align:center;font-size:13.6px;font-weight:bold;color:#000">Interest /Month</div>
<div style="left:283px;top:507px;width:129px;height:41px;background:#a6a6a6;border:1.6px solid #1a1a1a"></div>
<div class="red" style="left:283px;top:528.5px;width:129px;height:20px;line-height:20px;text-align:center;transform-origin:50% 50%"><svg class="rs" viewBox="0 0 8 10"><path d="M0.4 1H7.6M0.4 3.5H7.6M1.8 1C6 1 6 6 1.8 6H1.3L6.3 10" fill="none" stroke="currentColor" stroke-width="1.3"/></svg>-19,280.31</div>
<div style="left:411px;top:507px;width:209px;height:41px;background:#00b050;border:1.6px solid #1a1a1a"></div>
<div style="left:411px;top:528px;width:209px;height:20px;line-height:20px;text-align:center;font-size:13.6px;font-weight:bold;color:#000">principle / Month</div>
<div class="red" style="left:412px;top:609px;width:77.5px;height:20px;line-height:20px;text-align:right;"><svg class="rs" viewBox="0 0 8 10"><path d="M0.4 1H7.6M0.4 3.5H7.6M1.8 1C6 1 6 6 1.8 6H1.3L6.3 10" fill="none" stroke="currentColor" stroke-width="1.3"/></svg>-22,613.65</div>
<div class="red" style="left:412px;top:629px;width:77.5px;height:20px;line-height:20px;text-align:right;"><svg class="rs" viewBox="0 0 8 10"><path d="M0.4 1H7.6M0.4 3.5H7.6M1.8 1C6 1 6 6 1.8 6H1.3L6.3 10" fill="none" stroke="currentColor" stroke-width="1.3"/></svg>-3,333.33</div>
<div class="red" style="left:412px;top:649px;width:77.5px;height:20px;line-height:20px;text-align:right;"><svg class="rs" viewBox="0 0 8 10"><path d="M0.4 1H7.6M0.4 3.5H7.6M1.8 1C6 1 6 6 1.8 6H1.3L6.3 10" fill="none" stroke="currentColor" stroke-width="1.3"/></svg>-19,280.31</div>
<div style="left:747px;top:287px;width:354px;height:402px;background:#fff"></div>
<div style="left:747px;top:287px;width:1px;height:402px;background:#222"></div>
<div style="left:811px;top:287px;width:1px;height:402px;background:#222"></div>
<div style="left:948px;top:287px;width:1px;height:402px;background:#222"></div>
<div style="left:1020px;top:287px;width:1px;height:402px;background:#222"></div>
<div style="left:1100px;top:287px;width:1px;height:402px;background:#222"></div>
<div style="left:747px;top:287px;width:354px;height:1px;background:#222"></div>
<div style="left:747px;top:307px;width:354px;height:1px;background:#222"></div>
<div style="left:747px;top:327px;width:354px;height:1px;background:#222"></div>
<div style="left:747px;top:347px;width:354px;height:1px;background:#222"></div>
<div style="left:747px;top:367px;width:354px;height:1px;background:#222"></div>
<div style="left:747px;top:387px;width:354px;height:1px;background:#222"></div>
<div style="left:747px;top:407px;width:354px;height:1px;background:#222"></div>
<div style="left:747px;top:427px;width:354px;height:1px;background:#222"></div>
<div style="left:747px;top:447px;width:354px;height:1px;background:#222"></div>
<div style="left:747px;top:467px;width:354px;height:1px;background:#222"></div>
<div style="left:747px;top:487px;width:354px;height:1px;background:#222"></div>
<div style="left:747px;top:507px;width:354px;height:1px;background:#222"></div>
<div style="left:747px;top:527px;width:354px;height:1px;background:#222"></div>
<div style="left:747px;top:547px;width:354px;height:1px;background:#222"></div>
<div style="left:747px;top:567px;width:354px;height:1px;background:#222"></div>
<div style="left:747px;top:587px;width:354px;height:1px;background:#222"></div>
<div style="left:747px;top:607px;width:354px;height:1px;background:#222"></div>
<div style="left:747px;top:627px;width:354px;height:1px;background:#222"></div>
<div style="left:747px;top:647px;width:354px;height:1px;background:#222"></div>
<div style="left:747px;top:667px;width:354px;height:1px;background:#222"></div>
<div style="left:747px;top:687px;width:354px;height:1px;background:#222"></div>
<div class="cell" style="left:750px;top:288.3px;height:20px;line-height:20px;">Months</div>
<div class="cell" style="left:814px;top:288.3px;height:20px;line-height:20px;">Principle Deducation</div>
<div class="cell" style="left:951px;top:288.3px;height:20px;line-height:20px;">Interest</div>
<div class="cell" style="left:1023px;top:288.3px;height:20px;line-height:20px;">Instalment</div>
<div class="cell sx" style="left:748px;top:309px;width:61.5px;height:20px;line-height:20px;text-align:right;">1</div>
<div class="cell red" style="left:812px;top:309px;width:134.7px;height:20px;line-height:20px;text-align:right;"><svg class="rs" viewBox="0 0 8 10"><path d="M0.4 1H7.6M0.4 3.5H7.6M1.8 1C6 1 6 6 1.8 6H1.3L6.3 10" fill="none" stroke="currentColor" stroke-width="1.3"/></svg>-19,280.31</div>
<div class="cell red" style="left:949px;top:309px;width:69.7px;height:20px;line-height:20px;text-align:right;"><svg class="rs" viewBox="0 0 8 10"><path d="M0.4 1H7.6M0.4 3.5H7.6M1.8 1C6 1 6 6 1.8 6H1.3L6.3 10" fill="none" stroke="currentColor" stroke-width="1.3"/></svg>-3,333.33</div>
<div class="cell red" style="left:1021px;top:309px;width:77.7px;height:20px;line-height:20px;text-align:right;"><svg class="rs" viewBox="0 0 8 10"><path d="M0.4 1H7.6M0.4 3.5H7.6M1.8 1C6 1 6 6 1.8 6H1.3L6.3 10" fill="none" stroke="currentColor" stroke-width="1.3"/></svg>-22,613.65</div>
<div class="cell sx" style="left:748px;top:329px;width:61.5px;height:20px;line-height:20px;text-align:right;">2</div>
<div class="cell red" style="left:812px;top:329px;width:134.7px;height:20px;line-height:20px;text-align:right;"><svg class="rs" viewBox="0 0 8 10"><path d="M0.4 1H7.6M0.4 3.5H7.6M1.8 1C6 1 6 6 1.8 6H1.3L6.3 10" fill="none" stroke="currentColor" stroke-width="1.3"/></svg>-19,408.85</div>
<div class="cell red" style="left:949px;top:329px;width:69.7px;height:20px;line-height:20px;text-align:right;"><svg class="rs" viewBox="0 0 8 10"><path d="M0.4 1H7.6M0.4 3.5H7.6M1.8 1C6 1 6 6 1.8 6H1.3L6.3 10" fill="none" stroke="currentColor" stroke-width="1.3"/></svg>-3,204.80</div>
<div class="cell red" style="left:1021px;top:329px;width:77.7px;height:20px;line-height:20px;text-align:right;"><svg class="rs" viewBox="0 0 8 10"><path d="M0.4 1H7.6M0.4 3.5H7.6M1.8 1C6 1 6 6 1.8 6H1.3L6.3 10" fill="none" stroke="currentColor" stroke-width="1.3"/></svg>-22,613.65</div>
<div class="cell sx" style="left:748px;top:349px;width:61.5px;height:20px;line-height:20px;text-align:right;">3</div>
<div class="cell red" style="left:812px;top:349px;width:134.7px;height:20px;line-height:20px;text-align:right;"><svg class="rs" viewBox="0 0 8 10"><path d="M0.4 1H7.6M0.4 3.5H7.6M1.8 1C6 1 6 6 1.8 6H1.3L6.3 10" fill="none" stroke="currentColor" stroke-width="1.3"/></svg>-19,538.24</div>
<div class="cell red" style="left:949px;top:349px;width:69.7px;height:20px;line-height:20px;text-align:right;"><svg class="rs" viewBox="0 0 8 10"><path d="M0.4 1H7.6M0.4 3.5H7.6M1.8 1C6 1 6 6 1.8 6H1.3L6.3 10" fill="none" stroke="currentColor" stroke-width="1.3"/></svg>-3,075.41</div>
<div class="cell red" style="left:1021px;top:349px;width:77.7px;height:20px;line-height:20px;text-align:right;"><svg class="rs" viewBox="0 0 8 10"><path d="M0.4 1H7.6M0.4 3.5H7.6M1.8 1C6 1 6 6 1.8 6H1.3L6.3 10" fill="none" stroke="currentColor" stroke-width="1.3"/></svg>-22,613.65</div>
<div class="cell sx" style="left:748px;top:369px;width:61.5px;height:20px;line-height:20px;text-align:right;">4</div>
<div class="cell red" style="left:812px;top:369px;width:134.7px;height:20px;line-height:20px;text-align:right;"><svg class="rs" viewBox="0 0 8 10"><path d="M0.4 1H7.6M0.4 3.5H7.6M1.8 1C6 1 6 6 1.8 6H1.3L6.3 10" fill="none" stroke="currentColor" stroke-width="1.3"/></svg>-19,668.50</div>
<div class="cell red" style="left:949px;top:369px;width:69.7px;height:20px;line-height:20px;text-align:right;"><svg class="rs" viewBox="0 0 8 10"><path d="M0.4 1H7.6M0.4 3.5H7.6M1.8 1C6 1 6 6 1.8 6H1.3L6.3 10" fill="none" stroke="currentColor" stroke-width="1.3"/></svg>-2,945.15</div>
<div class="cell red" style="left:1021px;top:369px;width:77.7px;height:20px;line-height:20px;text-align:right;"><svg class="rs" viewBox="0 0 8 10"><path d="M0.4 1H7.6M0.4 3.5H7.6M1.8 1C6 1 6 6 1.8 6H1.3L6.3 10" fill="none" stroke="currentColor" stroke-width="1.3"/></svg>-22,613.65</div>
<div class="cell sx" style="left:748px;top:389px;width:61.5px;height:20px;line-height:20px;text-align:right;">5</div>
<div class="cell red" style="left:812px;top:389px;width:134.7px;height:20px;line-height:20px;text-align:right;"><svg class="rs" viewBox="0 0 8 10"><path d="M0.4 1H7.6M0.4 3.5H7.6M1.8 1C6 1 6 6 1.8 6H1.3L6.3 10" fill="none" stroke="currentColor" stroke-width="1.3"/></svg>-19,799.62</div>
<div class="cell red" style="left:949px;top:389px;width:69.7px;height:20px;line-height:20px;text-align:right;"><svg class="rs" viewBox="0 0 8 10"><path d="M0.4 1H7.6M0.4 3.5H7.6M1.8 1C6 1 6 6 1.8 6H1.3L6.3 10" fill="none" stroke="currentColor" stroke-width="1.3"/></svg>-2,814.03</div>
<div class="cell red" style="left:1021px;top:389px;width:77.7px;height:20px;line-height:20px;text-align:right;"><svg class="rs" viewBox="0 0 8 10"><path d="M0.4 1H7.6M0.4 3.5H7.6M1.8 1C6 1 6 6 1.8 6H1.3L6.3 10" fill="none" stroke="currentColor" stroke-width="1.3"/></svg>-22,613.65</div>
<div class="cell sx" style="left:748px;top:409px;width:61.5px;height:20px;line-height:20px;text-align:right;">6</div>
<div class="cell red" style="left:812px;top:409px;width:134.7px;height:20px;line-height:20px;text-align:right;"><svg class="rs" viewBox="0 0 8 10"><path d="M0.4 1H7.6M0.4 3.5H7.6M1.8 1C6 1 6 6 1.8 6H1.3L6.3 10" fill="none" stroke="currentColor" stroke-width="1.3"/></svg>-19,931.62</div>
<div class="cell red" style="left:949px;top:409px;width:69.7px;height:20px;line-height:20px;text-align:right;"><svg class="rs" viewBox="0 0 8 10"><path d="M0.4 1H7.6M0.4 3.5H7.6M1.8 1C6 1 6 6 1.8 6H1.3L6.3 10" fill="none" stroke="currentColor" stroke-width="1.3"/></svg>-2,682.03</div>
<div class="cell red" style="left:1021px;top:409px;width:77.7px;height:20px;line-height:20px;text-align:right;"><svg class="rs" viewBox="0 0 8 10"><path d="M0.4 1H7.6M0.4 3.5H7.6M1.8 1C6 1 6 6 1.8 6H1.3L6.3 10" fill="none" stroke="currentColor" stroke-width="1.3"/></svg>-22,613.65</div>
<div class="cell sx" style="left:748px;top:429px;width:61.5px;height:20px;line-height:20px;text-align:right;">7</div>
<div class="cell red" style="left:812px;top:429px;width:134.7px;height:20px;line-height:20px;text-align:right;"><svg class="rs" viewBox="0 0 8 10"><path d="M0.4 1H7.6M0.4 3.5H7.6M1.8 1C6 1 6 6 1.8 6H1.3L6.3 10" fill="none" stroke="currentColor" stroke-width="1.3"/></svg>-20,064.49</div>
<div class="cell red" style="left:949px;top:429px;width:69.7px;height:20px;line-height:20px;text-align:right;"><svg class="rs" viewBox="0 0 8 10"><path d="M0.4 1H7.6M0.4 3.5H7.6M1.8 1C6 1 6 6 1.8 6H1.3L6.3 10" fill="none" stroke="currentColor" stroke-width="1.3"/></svg>-2,549.15</div>
<div class="cell red" style="left:1021px;top:429px;width:77.7px;height:20px;line-height:20px;text-align:right;"><svg class="rs" viewBox="0 0 8 10"><path d="M0.4 1H7.6M0.4 3.5H7.6M1.8 1C6 1 6 6 1.8 6H1.3L6.3 10" fill="none" stroke="currentColor" stroke-width="1.3"/></svg>-22,613.65</div>
<div class="cell sx" style="left:748px;top:449px;width:61.5px;height:20px;line-height:20px;text-align:right;">8</div>
<div class="cell red" style="left:812px;top:449px;width:134.7px;height:20px;line-height:20px;text-align:right;"><svg class="rs" viewBox="0 0 8 10"><path d="M0.4 1H7.6M0.4 3.5H7.6M1.8 1C6 1 6 6 1.8 6H1.3L6.3 10" fill="none" stroke="currentColor" stroke-width="1.3"/></svg>-20,198.26</div>
<div class="cell red" style="left:949px;top:449px;width:69.7px;height:20px;line-height:20px;text-align:right;"><svg class="rs" viewBox="0 0 8 10"><path d="M0.4 1H7.6M0.4 3.5H7.6M1.8 1C6 1 6 6 1.8 6H1.3L6.3 10" fill="none" stroke="currentColor" stroke-width="1.3"/></svg>-2,415.39</div>
<div class="cell red" style="left:1021px;top:449px;width:77.7px;height:20px;line-height:20px;text-align:right;"><svg class="rs" viewBox="0 0 8 10"><path d="M0.4 1H7.6M0.4 3.5H7.6M1.8 1C6 1 6 6 1.8 6H1.3L6.3 10" fill="none" stroke="currentColor" stroke-width="1.3"/></svg>-22,613.65</div>
<div class="cell sx" style="left:748px;top:469px;width:61.5px;height:20px;line-height:20px;text-align:right;">9</div>
<div class="cell red" style="left:812px;top:469px;width:134.7px;height:20px;line-height:20px;text-align:right;"><svg class="rs" viewBox="0 0 8 10"><path d="M0.4 1H7.6M0.4 3.5H7.6M1.8 1C6 1 6 6 1.8 6H1.3L6.3 10" fill="none" stroke="currentColor" stroke-width="1.3"/></svg>-20,332.91</div>
<div class="cell red" style="left:949px;top:469px;width:69.7px;height:20px;line-height:20px;text-align:right;"><svg class="rs" viewBox="0 0 8 10"><path d="M0.4 1H7.6M0.4 3.5H7.6M1.8 1C6 1 6 6 1.8 6H1.3L6.3 10" fill="none" stroke="currentColor" stroke-width="1.3"/></svg>-2,280.73</div>
<div class="cell red" style="left:1021px;top:469px;width:77.7px;height:20px;line-height:20px;text-align:right;"><svg class="rs" viewBox="0 0 8 10"><path d="M0.4 1H7.6M0.4 3.5H7.6M1.8 1C6 1 6 6 1.8 6H1.3L6.3 10" fill="none" stroke="currentColor" stroke-width="1.3"/></svg>-22,613.65</div>
<div class="cell sx" style="left:748px;top:489px;width:61.5px;height:20px;line-height:20px;text-align:right;">10</div>
<div class="cell red" style="left:812px;top:489px;width:134.7px;height:20px;line-height:20px;text-align:right;"><svg class="rs" viewBox="0 0 8 10"><path d="M0.4 1H7.6M0.4 3.5H7.6M1.8 1C6 1 6 6 1.8 6H1.3L6.3 10" fill="none" stroke="currentColor" stroke-width="1.3"/></svg>-20,468.46</div>
<div class="cell red" style="left:949px;top:489px;width:69.7px;height:20px;line-height:20px;text-align:right;"><svg class="rs" viewBox="0 0 8 10"><path d="M0.4 1H7.6M0.4 3.5H7.6M1.8 1C6 1 6 6 1.8 6H1.3L6.3 10" fill="none" stroke="currentColor" stroke-width="1.3"/></svg>-2,145.18</div>
<div class="cell red" style="left:1021px;top:489px;width:77.7px;height:20px;line-height:20px;text-align:right;"><svg class="rs" viewBox="0 0 8 10"><path d="M0.4 1H7.6M0.4 3.5H7.6M1.8 1C6 1 6 6 1.8 6H1.3L6.3 10" fill="none" stroke="currentColor" stroke-width="1.3"/></svg>-22,613.65</div>
<div class="cell sx" style="left:748px;top:509px;width:61.5px;height:20px;line-height:20px;text-align:right;">11</div>
<div class="cell red" style="left:812px;top:509px;width:134.7px;height:20px;line-height:20px;text-align:right;"><svg class="rs" viewBox="0 0 8 10"><path d="M0.4 1H7.6M0.4 3.5H7.6M1.8 1C6 1 6 6 1.8 6H1.3L6.3 10" fill="none" stroke="currentColor" stroke-width="1.3"/></svg>-20,604.92</div>
<div class="cell red" style="left:949px;top:509px;width:69.7px;height:20px;line-height:20px;text-align:right;"><svg class="rs" viewBox="0 0 8 10"><path d="M0.4 1H7.6M0.4 3.5H7.6M1.8 1C6 1 6 6 1.8 6H1.3L6.3 10" fill="none" stroke="currentColor" stroke-width="1.3"/></svg>-2,008.72</div>
<div class="cell red" style="left:1021px;top:509px;width:77.7px;height:20px;line-height:20px;text-align:right;"><svg class="rs" viewBox="0 0 8 10"><path d="M0.4 1H7.6M0.4 3.5H7.6M1.8 1C6 1 6 6 1.8 6H1.3L6.3 10" fill="none" stroke="currentColor" stroke-width="1.3"/></svg>-22,613.65</div>
<div class="cell sx" style="left:748px;top:529px;width:61.5px;height:20px;line-height:20px;text-align:right;">12</div>
<div class="cell red" style="left:812px;top:529px;width:134.7px;height:20px;line-height:20px;text-align:right;"><svg class="rs" viewBox="0 0 8 10"><path d="M0.4 1H7.6M0.4 3.5H7.6M1.8 1C6 1 6 6 1.8 6H1.3L6.3 10" fill="none" stroke="currentColor" stroke-width="1.3"/></svg>-20,742.29</div>
<div class="cell red" style="left:949px;top:529px;width:69.7px;height:20px;line-height:20px;text-align:right;"><svg class="rs" viewBox="0 0 8 10"><path d="M0.4 1H7.6M0.4 3.5H7.6M1.8 1C6 1 6 6 1.8 6H1.3L6.3 10" fill="none" stroke="currentColor" stroke-width="1.3"/></svg>-1,871.36</div>
<div class="cell red" style="left:1021px;top:529px;width:77.7px;height:20px;line-height:20px;text-align:right;"><svg class="rs" viewBox="0 0 8 10"><path d="M0.4 1H7.6M0.4 3.5H7.6M1.8 1C6 1 6 6 1.8 6H1.3L6.3 10" fill="none" stroke="currentColor" stroke-width="1.3"/></svg>-22,613.65</div>
<div class="cell sx" style="left:748px;top:549px;width:61.5px;height:20px;line-height:20px;text-align:right;">13</div>
<div class="cell red" style="left:812px;top:549px;width:134.7px;height:20px;line-height:20px;text-align:right;"><svg class="rs" viewBox="0 0 8 10"><path d="M0.4 1H7.6M0.4 3.5H7.6M1.8 1C6 1 6 6 1.8 6H1.3L6.3 10" fill="none" stroke="currentColor" stroke-width="1.3"/></svg>-20,880.57</div>
<div class="cell red" style="left:949px;top:549px;width:69.7px;height:20px;line-height:20px;text-align:right;"><svg class="rs" viewBox="0 0 8 10"><path d="M0.4 1H7.6M0.4 3.5H7.6M1.8 1C6 1 6 6 1.8 6H1.3L6.3 10" fill="none" stroke="currentColor" stroke-width="1.3"/></svg>-1,733.08</div>
<div class="cell red" style="left:1021px;top:549px;width:77.7px;height:20px;line-height:20px;text-align:right;"><svg class="rs" viewBox="0 0 8 10"><path d="M0.4 1H7.6M0.4 3.5H7.6M1.8 1C6 1 6 6 1.8 6H1.3L6.3 10" fill="none" stroke="currentColor" stroke-width="1.3"/></svg>-22,613.65</div>
<div class="cell sx" style="left:748px;top:569px;width:61.5px;height:20px;line-height:20px;text-align:right;">14</div>
<div class="cell red" style="left:812px;top:569px;width:134.7px;height:20px;line-height:20px;text-align:right;"><svg class="rs" viewBox="0 0 8 10"><path d="M0.4 1H7.6M0.4 3.5H7.6M1.8 1C6 1 6 6 1.8 6H1.3L6.3 10" fill="none" stroke="currentColor" stroke-width="1.3"/></svg>-21,019.77</div>
<div class="cell red" style="left:949px;top:569px;width:69.7px;height:20px;line-height:20px;text-align:right;"><svg class="rs" viewBox="0 0 8 10"><path d="M0.4 1H7.6M0.4 3.5H7.6M1.8 1C6 1 6 6 1.8 6H1.3L6.3 10" fill="none" stroke="currentColor" stroke-width="1.3"/></svg>-1,593.87</div>
<div class="cell red" style="left:1021px;top:569px;width:77.7px;height:20px;line-height:20px;text-align:right;"><svg class="rs" viewBox="0 0 8 10"><path d="M0.4 1H7.6M0.4 3.5H7.6M1.8 1C6 1 6 6 1.8 6H1.3L6.3 10" fill="none" stroke="currentColor" stroke-width="1.3"/></svg>-22,613.65</div>
<div class="cell sx" style="left:748px;top:589px;width:61.5px;height:20px;line-height:20px;text-align:right;">15</div>
<div class="cell red" style="left:812px;top:589px;width:134.7px;height:20px;line-height:20px;text-align:right;"><svg class="rs" viewBox="0 0 8 10"><path d="M0.4 1H7.6M0.4 3.5H7.6M1.8 1C6 1 6 6 1.8 6H1.3L6.3 10" fill="none" stroke="currentColor" stroke-width="1.3"/></svg>-21,159.90</div>
<div class="cell red" style="left:949px;top:589px;width:69.7px;height:20px;line-height:20px;text-align:right;"><svg class="rs" viewBox="0 0 8 10"><path d="M0.4 1H7.6M0.4 3.5H7.6M1.8 1C6 1 6 6 1.8 6H1.3L6.3 10" fill="none" stroke="currentColor" stroke-width="1.3"/></svg>-1,453.74</div>
<div class="cell red" style="left:1021px;top:589px;width:77.7px;height:20px;line-height:20px;text-align:right;"><svg class="rs" viewBox="0 0 8 10"><path d="M0.4 1H7.6M0.4 3.5H7.6M1.8 1C6 1 6 6 1.8 6H1.3L6.3 10" fill="none" stroke="currentColor" stroke-width="1.3"/></svg>-22,613.65</div>
<div class="cell sx" style="left:748px;top:609px;width:61.5px;height:20px;line-height:20px;text-align:right;">16</div>
<div class="cell red" style="left:812px;top:609px;width:134.7px;height:20px;line-height:20px;text-align:right;"><svg class="rs" viewBox="0 0 8 10"><path d="M0.4 1H7.6M0.4 3.5H7.6M1.8 1C6 1 6 6 1.8 6H1.3L6.3 10" fill="none" stroke="currentColor" stroke-width="1.3"/></svg>-21,300.97</div>
<div class="cell red" style="left:949px;top:609px;width:69.7px;height:20px;line-height:20px;text-align:right;"><svg class="rs" viewBox="0 0 8 10"><path d="M0.4 1H7.6M0.4 3.5H7.6M1.8 1C6 1 6 6 1.8 6H1.3L6.3 10" fill="none" stroke="currentColor" stroke-width="1.3"/></svg>-1,312.68</div>
<div class="cell red" style="left:1021px;top:609px;width:77.7px;height:20px;line-height:20px;text-align:right;"><svg class="rs" viewBox="0 0 8 10"><path d="M0.4 1H7.6M0.4 3.5H7.6M1.8 1C6 1 6 6 1.8 6H1.3L6.3 10" fill="none" stroke="currentColor" stroke-width="1.3"/></svg>-22,613.65</div>
<div class="cell sx" style="left:748px;top:629px;width:61.5px;height:20px;line-height:20px;text-align:right;">17</div>
<div class="cell red" style="left:812px;top:629px;width:134.7px;height:20px;line-height:20px;text-align:right;"><svg class="rs" viewBox="0 0 8 10"><path d="M0.4 1H7.6M0.4 3.5H7.6M1.8 1C6 1 6 6 1.8 6H1.3L6.3 10" fill="none" stroke="currentColor" stroke-width="1.3"/></svg>-21,442.98</div>
<div class="cell red" style="left:949px;top:629px;width:69.7px;height:20px;line-height:20px;text-align:right;"><svg class="rs" viewBox="0 0 8 10"><path d="M0.4 1H7.6M0.4 3.5H7.6M1.8 1C6 1 6 6 1.8 6H1.3L6.3 10" fill="none" stroke="currentColor" stroke-width="1.3"/></svg>-1,170.67</div>
<div class="cell red" style="left:1021px;top:629px;width:77.7px;height:20px;line-height:20px;text-align:right;"><svg class="rs" viewBox="0 0 8 10"><path d="M0.4 1H7.6M0.4 3.5H7.6M1.8 1C6 1 6 6 1.8 6H1.3L6.3 10" fill="none" stroke="currentColor" stroke-width="1.3"/></svg>-22,613.65</div>
<div class="cell sx" style="left:748px;top:649px;width:61.5px;height:20px;line-height:20px;text-align:right;">18</div>
<div class="cell red" style="left:812px;top:649px;width:134.7px;height:20px;line-height:20px;text-align:right;"><svg class="rs" viewBox="0 0 8 10"><path d="M0.4 1H7.6M0.4 3.5H7.6M1.8 1C6 1 6 6 1.8 6H1.3L6.3 10" fill="none" stroke="currentColor" stroke-width="1.3"/></svg>-21,585.93</div>
<div class="cell red" style="left:949px;top:649px;width:69.7px;height:20px;line-height:20px;text-align:right;"><svg class="rs" viewBox="0 0 8 10"><path d="M0.4 1H7.6M0.4 3.5H7.6M1.8 1C6 1 6 6 1.8 6H1.3L6.3 10" fill="none" stroke="currentColor" stroke-width="1.3"/></svg>-1,027.72</div>
<div class="cell red" style="left:1021px;top:649px;width:77.7px;height:20px;line-height:20px;text-align:right;"><svg class="rs" viewBox="0 0 8 10"><path d="M0.4 1H7.6M0.4 3.5H7.6M1.8 1C6 1 6 6 1.8 6H1.3L6.3 10" fill="none" stroke="currentColor" stroke-width="1.3"/></svg>-22,613.65</div>
<div class="cell sx" style="left:748px;top:669px;width:61.5px;height:20px;line-height:20px;text-align:right;">19</div>
<div class="cell red" style="left:812px;top:669px;width:134.7px;height:20px;line-height:20px;text-align:right;"><svg class="rs" viewBox="0 0 8 10"><path d="M0.4 1H7.6M0.4 3.5H7.6M1.8 1C6 1 6 6 1.8 6H1.3L6.3 10" fill="none" stroke="currentColor" stroke-width="1.3"/></svg>-21,729.84</div>
<div class="cell red" style="left:949px;top:669px;width:69.7px;height:20px;line-height:20px;text-align:right;"><svg class="rs" viewBox="0 0 8 10"><path d="M0.4 1H7.6M0.4 3.5H7.6M1.8 1C6 1 6 6 1.8 6H1.3L6.3 10" fill="none" stroke="currentColor" stroke-width="1.3"/></svg>-883.81</div>
<div class="cell red" style="left:1021px;top:669px;width:77.7px;height:20px;line-height:20px;text-align:right;"><svg class="rs" viewBox="0 0 8 10"><path d="M0.4 1H7.6M0.4 3.5H7.6M1.8 1C6 1 6 6 1.8 6H1.3L6.3 10" fill="none" stroke="currentColor" stroke-width="1.3"/></svg>-22,613.65</div>
<div style="left:809px;top:306px;width:142px;height:22.5px;border:2.6px solid #4a4a4a"></div>
<div style="left:947px;top:323.5px;width:6px;height:6px;background:#111;border:1px solid #fff"></div>
<div style="left:0px;top:188px;width:26px;height:502px;background:#e4ecf7;border-right:1px solid #9eb6ce"></div>
<div style="left:0px;top:207px;width:26px;height:1px;background:#9eb6ce"></div>
<div style="left:0px;top:188.5px;width:24px;height:20px;line-height:20px;text-align:center;font-size:13px;color:#22364f;-webkit-text-stroke:0.2px currentColor">1</div>
<div style="left:0px;top:227px;width:26px;height:1px;background:#9eb6ce"></div>
<div style="left:0px;top:208.5px;width:24px;height:20px;line-height:20px;text-align:center;font-size:13px;color:#22364f;-webkit-text-stroke:0.2px currentColor">2</div>
<div style="left:0px;top:247px;width:26px;height:1px;background:#9eb6ce"></div>
<div style="left:0px;top:228.5px;width:24px;height:20px;line-height:20px;text-align:center;font-size:13px;color:#22364f;-webkit-text-stroke:0.2px currentColor">3</div>
<div style="left:0px;top:267px;width:26px;height:1px;background:#9eb6ce"></div>
<div style="left:0px;top:248.5px;width:24px;height:20px;line-height:20px;text-align:center;font-size:13px;color:#22364f;-webkit-text-stroke:0.2px currentColor">4</div>
<div style="left:0px;top:287px;width:26px;height:1px;background:#9eb6ce"></div>
<div style="left:0px;top:268.5px;width:24px;height:20px;line-height:20px;text-align:center;font-size:13px;color:#22364f;-webkit-text-stroke:0.2px currentColor">5</div>
<div style="left:0px;top:307px;width:26px;height:1px;background:#9eb6ce"></div>
<div style="left:0px;top:288.5px;width:24px;height:20px;line-height:20px;text-align:center;font-size:13px;color:#22364f;-webkit-text-stroke:0.2px currentColor">6</div>
<div style="left:0px;top:308px;width:26px;height:20px;background:linear-gradient(#fcdda2,#f8cf86);border-right:1px solid #f0a848"></div>
<div style="left:0px;top:327px;width:26px;height:1px;background:#9eb6ce"></div>
<div style="left:0px;top:308.5px;width:24px;height:20px;line-height:20px;text-align:center;font-size:13px;color:#22364f;-webkit-text-stroke:0.2px currentColor">7</div>
<div style="left:0px;top:347px;width:26px;height:1px;background:#9eb6ce"></div>
<div style="left:0px;top:328.5px;width:24px;height:20px;line-height:20px;text-align:center;font-size:13px;color:#22364f;-webkit-text-stroke:0.2px currentColor">8</div>
<div style="left:0px;top:367px;width:26px;height:1px;background:#9eb6ce"></div>
<div style="left:0px;top:348.5px;width:24px;height:20px;line-height:20px;text-align:center;font-size:13px;color:#22364f;-webkit-text-stroke:0.2px currentColor">9</div>
<div style="left:0px;top:387px;width:26px;height:1px;background:#9eb6ce"></div>
<div style="left:0px;top:368.5px;width:24px;height:20px;line-height:20px;text-align:center;font-size:13px;color:#22364f;-webkit-text-stroke:0.2px currentColor">10</div>
<div style="left:0px;top:407px;width:26px;height:1px;background:#9eb6ce"></div>
<div style="left:0px;top:388.5px;width:24px;height:20px;line-height:20px;text-align:center;font-size:13px;color:#22364f;-webkit-text-stroke:0.2px currentColor">11</div>
<div style="left:0px;top:427px;width:26px;height:1px;background:#9eb6ce"></div>
<div style="left:0px;top:408.5px;width:24px;height:20px;line-height:20px;text-align:center;font-size:13px;color:#22364f;-webkit-text-stroke:0.2px currentColor">12</div>
<div style="left:0px;top:447px;width:26px;height:1px;background:#9eb6ce"></div>
<div style="left:0px;top:428.5px;width:24px;height:20px;line-height:20px;text-align:center;font-size:13px;color:#22364f;-webkit-text-stroke:0.2px currentColor">13</div>
<div style="left:0px;top:467px;width:26px;height:1px;background:#9eb6ce"></div>
<div style="left:0px;top:448.5px;width:24px;height:20px;line-height:20px;text-align:center;font-size:13px;color:#22364f;-webkit-text-stroke:0.2px currentColor">14</div>
<div style="left:0px;top:487px;width:26px;height:1px;background:#9eb6ce"></div>
<div style="left:0px;top:468.5px;width:24px;height:20px;line-height:20px;text-align:center;font-size:13px;color:#22364f;-webkit-text-stroke:0.2px currentColor">15</div>
<div style="left:0px;top:507px;width:26px;height:1px;background:#9eb6ce"></div>
<div style="left:0px;top:488.5px;width:24px;height:20px;line-height:20px;text-align:center;font-size:13px;color:#22364f;-webkit-text-stroke:0.2px currentColor">16</div>
<div style="left:0px;top:527px;width:26px;height:1px;background:#9eb6ce"></div>
<div style="left:0px;top:508.5px;width:24px;height:20px;line-height:20px;text-align:center;font-size:13px;color:#22364f;-webkit-text-stroke:0.2px currentColor">17</div>
<div style="left:0px;top:547px;width:26px;height:1px;background:#9eb6ce"></div>
<div style="left:0px;top:528.5px;width:24px;height:20px;line-height:20px;text-align:center;font-size:13px;color:#22364f;-webkit-text-stroke:0.2px currentColor">18</div>
<div style="left:0px;top:567px;width:26px;height:1px;background:#9eb6ce"></div>
<div style="left:0px;top:548.5px;width:24px;height:20px;line-height:20px;text-align:center;font-size:13px;color:#22364f;-webkit-text-stroke:0.2px currentColor">19</div>
<div style="left:0px;top:587px;width:26px;height:1px;background:#9eb6ce"></div>
<div style="left:0px;top:568.5px;width:24px;height:20px;line-height:20px;text-align:center;font-size:13px;color:#22364f;-webkit-text-stroke:0.2px currentColor">20</div>
<div style="left:0px;top:607px;width:26px;height:1px;background:#9eb6ce"></div>
<div style="left:0px;top:588.5px;width:24px;height:20px;line-height:20px;text-align:center;font-size:13px;color:#22364f;-webkit-text-stroke:0.2px currentColor">21</div>
<div style="left:0px;top:627px;width:26px;height:1px;background:#9eb6ce"></div>
<div style="left:0px;top:608.5px;width:24px;height:20px;line-height:20px;text-align:center;font-size:13px;color:#22364f;-webkit-text-stroke:0.2px currentColor">22</div>
<div style="left:0px;top:647px;width:26px;height:1px;background:#9eb6ce"></div>
<div style="left:0px;top:628.5px;width:24px;height:20px;line-height:20px;text-align:center;font-size:13px;color:#22364f;-webkit-text-stroke:0.2px currentColor">23</div>
<div style="left:0px;top:667px;width:26px;height:1px;background:#9eb6ce"></div>
<div style="left:0px;top:648.5px;width:24px;height:20px;line-height:20px;text-align:center;font-size:13px;color:#22364f;-webkit-text-stroke:0.2px currentColor">24</div>
<div style="left:0px;top:687px;width:26px;height:1px;background:#9eb6ce"></div>
<div style="left:0px;top:668.5px;width:24px;height:20px;line-height:20px;text-align:center;font-size:13px;color:#22364f;-webkit-text-stroke:0.2px currentColor">25</div>
<div style="left:1073px;top:651px;height:24px;line-height:24px;font-size:19.8px;color:rgba(120,120,120,0.55)">Activate Windows</div>
<div style="left:1073px;top:675px;height:18px;line-height:18px;font-size:15.3px;color:rgba(120,120,120,0.55)">Go to Settings to activate Windows.</div>
<div style="left:1346px;top:168px;width:20px;height:522px;background:#86a8da"></div>
<div style="left:1361px;top:168px;width:5px;height:522px;background:#aecbf0"></div>
<div style="left:1347px;top:169px;width:13px;height:6px;background:linear-gradient(#ffffff,#e4ecf6);border:1px solid #6f8fc0"></div>
<div style="left:1350px;top:171px;width:7px;height:1px;background:#44597a"></div>
<svg style="left:1348px;top:180px" width="12" height="8"><path d="M1.5 6.5L6 2L10.5 6.5Z" fill="#2f4670"/></svg>
<div style="left:1346px;top:192px;width:14.5px;height:401px;background:linear-gradient(90deg,#dfe7f2,#f2f6fb 35%,#d9e3f0 70%,#c5d3e6);border:1.2px solid #6c8cc0;border-radius:1.5px"></div>
<div style="left:1350px;top:385px;width:6px;height:10px;background:#aeb8c6"></div>
<svg style="left:1348px;top:676px" width="12" height="8"><path d="M1.5 1.5L6 6L10.5 1.5Z" fill="#2f4670"/></svg>
<div style="left:0px;top:690px;width:1366px;height:16px;background:linear-gradient(#a4bde2,#95b1dc);border-top:1.2px solid #7a9bcd;border-bottom:1px solid #89a6d3"></div>
<div style="left:0px;top:690px;width:63px;height:16px;background:linear-gradient(#d6e4f6,#bdd2ee);border-bottom:1px solid #8eaad2;border-right:1px solid #8eaad2"></div>
<svg style="left:0px;top:689px" width="64" height="18"><g fill="#2f4d84"><rect x="6.5" y="5" width="1.6" height="8"/><path d="M13 5L8.5 9L13 13Z"/><path d="M27 5L22.5 9L27 13Z"/><path d="M36 5L40.5 9L36 13Z"/><path d="M49 5L53.5 9L49 13Z"/><rect x="53.5" y="5" width="1.6" height="8"/></g></svg>
<svg style="left:0px;top:690px" width="300" height="16"><defs><linearGradient id="tg" x1="0" y1="0" x2="0" y2="1"><stop offset="0" stop-color="#dfe9f7"/><stop offset="1" stop-color="#c4d7ef"/></linearGradient><linearGradient id="tw" x1="0" y1="0" x2="0" y2="1"><stop offset="0" stop-color="#ffffff"/><stop offset="1" stop-color="#eef3fa"/></linearGradient></defs>
<path d="M241 15.5L251 0.5H283.5L272 15.5Z" fill="url(#tg)" stroke="#86a4cf" stroke-width="1"/>
<path d="M180 15.5L191.6 0.5H248.5L238 15.5Z" fill="url(#tg)" stroke="#86a4cf" stroke-width="1"/>
<path d="M121.6 15.5L132 0.5H191.6L181 15.5Z" fill="url(#tg)" stroke="#86a4cf" stroke-width="1"/>
<path d="M63 0V15.5H120L127 0Z" fill="url(#tw)" stroke="#86a4cf" stroke-width="1"/></svg>
<div style="left:72px;top:689px;height:17px;line-height:17px;font-size:13.2px;font-weight:bold;color:#1b3e7c">Sheet1</div>
<div style="left:134px;top:690px;height:17px;line-height:17px;font-size:12.4px;color:#1e3e80">Sheet2</div>
<div style="left:193px;top:690px;height:17px;line-height:17px;font-size:12.4px;color:#1e3e80">Sheet3</div>
<svg style="left:252px;top:690px" width="20" height="16"><rect x="5" y="5" width="12" height="9" fill="#fff" stroke="#8290a6"/><rect x="3" y="3" width="12" height="9" fill="#f4f6f9" stroke="#8290a6"/><circle cx="4.5" cy="4" r="2.6" fill="#f0a020"/></svg>
<div style="left:808px;top:691px;width:7px;height:14px;background:#fff;border:1px solid #6f8fc0"></div>
<div style="left:811px;top:694px;width:1px;height:8px;background:#44597a"></div>
<svg style="left:819px;top:692px" width="10" height="12"><path d="M7.5 2L3 6L7.5 10Z" fill="#2f4670"/></svg>
<div style="left:833px;top:691px;width:431px;height:14px;background:linear-gradient(#f7f9fc,#e3eaf3 45%,#ccd8e8);border:1.2px solid #6c8cc0;border-radius:1.5px"></div>
<div style="left:1043px;top:694px;width:10px;height:7px;background:#aeb8c6"></div>
<svg style="left:1324px;top:692px" width="10" height="12"><path d="M3 2L7.5 6L3 10Z" fill="#2f4670"/></svg>
<div style="left:1338px;top:691px;width:7px;height:14px;background:#fff;border:1px solid #6f8fc0"></div>
<div style="left:1341px;top:694px;width:1px;height:8px;background:#44597a"></div>
<div style="left:0px;top:706px;width:1366px;height:22px;background:linear-gradient(#e2eefc 0%,#cfe1f8 35%,#c2d8f4 65%,#d0e2f8 100%);border-top:1px solid #b5cdeb"></div>
<div style="left:6px;top:707px;height:20px;line-height:20px;font-size:10.8px;color:#1e3e80">Ready</div>
<div style="left:46px;top:708px;width:1px;height:18px;background:#a7bfdf"></div>
<svg style="left:55px;top:709px" width="18" height="16"><rect x="1.5" y="2.5" width="14" height="11" fill="#f3f5f8" stroke="#6f86a8"/><rect x="1.5" y="2.5" width="14" height="3" fill="#4f7bc4"/><rect x="4" y="8" width="2" height="5" fill="#9aa6b6"/><rect x="8" y="7" width="2" height="6" fill="#9aa6b6"/><circle cx="3.5" cy="3.5" r="3" fill="#e5552a"/></svg>
<div style="left:80px;top:708px;width:1px;height:18px;background:#a7bfdf"></div>
<div style="left:1120px;top:708px;width:1px;height:18px;background:#a7bfdf"></div>
<div style="left:1128px;top:710px;width:15.5px;height:14px;background:linear-gradient(#fde9a8,#f7c251);border:1px solid #d0a050"></div>
<div style="left:1146.5px;top:710px;width:15.5px;height:14px;background:linear-gradient(#e9eef5,#c9d3df);border:1px solid #a4b3c6"></div>
<div style="left:1165px;top:710px;width:15.5px;height:14px;background:linear-gradient(#e9eef5,#c9d3df);border:1px solid #a4b3c6"></div>
<svg style="left:1128px;top:710px" width="54" height="14"><g fill="none" stroke="#3a3a3a" stroke-width="0.9"><rect x="3" y="3" width="9.5" height="8"/><path d="M3 5.7H12.5M3 8.3H12.5M6.2 3V11M9.3 3V11"/></g><g fill="none" stroke="#3a3a3a" stroke-width="1"><rect x="21.5" y="3" width="9.5" height="8"/><rect x="24" y="3" width="4.5" height="8" fill="#fff"/></g><g fill="none" stroke="#3a3a3a" stroke-width="1"><path d="M40 3V11H49.5V3M43.5 3V8H46.5V3"/></g></svg>
<div style="left:1191px;top:707px;height:20px;line-height:20px;font-size:10.6px;color:#1e3e80">100%</div>
<svg style="left:1226px;top:708px" width="140" height="18"><circle cx="9" cy="9" r="6.5" fill="#e8eef6" stroke="#57718f" stroke-width="1.2"/><path d="M5.5 9H12.5" stroke="#333" stroke-width="1.6"/><path d="M17 9.5H124" stroke="#8ea5c2" stroke-width="1.2"/><path d="M72 5V13" stroke="#8ea5c2"/><path d="M60 3H68V11L64 15L60 11Z" fill="#f1f4f8" stroke="#6a7d95"/><circle cx="127" cy="9" r="6.5" fill="#e8eef6" stroke="#57718f" stroke-width="1.2"/><path d="M123.5 9H130.5M127 5.5V12.5" stroke="#333" stroke-width="1.6"/></svg>
<div style="left:0px;top:728px;width:1366px;height:40px;background:#3b3b3b"></div>
<div style="left:0px;top:728px;width:48px;height:40px;background:#383838"></div>
<svg style="left:15px;top:739px" width="18" height="18"><path d="M0.5 2.6L7.3 1.6V8H0.5Z M8.3 1.5L16.8 0.3V8H8.3Z M0.5 9H7.3V15.6L0.5 14.6Z M8.3 9H16.8V16.9L8.3 15.7Z" fill="#fff"/></svg>
<div style="left:48px;top:728px;width:288px;height:40px;background:#f2f2f2;border-left:1px solid #d9d9d9"></div>
<svg style="left:58px;top:738px" width="20" height="20"><circle cx="12" cy="7.5" r="5.5" fill="none" stroke="#333" stroke-width="1.4"/><path d="M8 11.5L2 17.5" stroke="#333" stroke-width="1.7"/></svg>
<div style="left:88px;top:738px;height:20px;line-height:20px;font-size:14.4px;color:#3a3a3a;-webkit-text-stroke:0">Type here to search</div>
<svg style="left:262px;top:730px" width="60" height="38"><defs><radialGradient id="st1" cx="40%" cy="30%" r="70%"><stop offset="0" stop-color="#ece6d6"/><stop offset="1" stop-color="#a89f88"/></radialGradient><radialGradient id="st2" cx="40%" cy="30%" r="70%"><stop offset="0" stop-color="#d2dc7a"/><stop offset="1" stop-color="#8d9a3a"/></radialGradient><radialGradient id="st3" cx="40%" cy="30%" r="70%"><stop offset="0" stop-color="#f0c080"/><stop offset="1" stop-color="#b87a38"/></radialGradient></defs>
<ellipse cx="36" cy="25" rx="17" ry="8.5" fill="url(#st1)"/><ellipse cx="36.5" cy="14" rx="13.5" ry="4.6" fill="url(#st2)"/><ellipse cx="39.5" cy="6.3" rx="7.5" ry="4" fill="url(#st3)"/>
<ellipse cx="12" cy="26" rx="5" ry="5.5" fill="#c08848"/><ellipse cx="7" cy="29.5" rx="5" ry="3" fill="#3a3a3a"/></svg>
<svg style="left:349px;top:735px" width="28" height="26"><path d="M12 3C5 3 1 8 1 13C1 18 4 22 8 22C11 22 10 18 13 18C17 18 22 17 22 11C22 6 18 3 12 3Z" fill="#dfe6ee" stroke="#9aa8b8" stroke-width="0.8"/><circle cx="6.5" cy="10" r="2" fill="#e84c3d"/><circle cx="11" cy="6.8" r="2" fill="#3498db"/><circle cx="16" cy="7.5" r="2" fill="#2ecc71"/><circle cx="6" cy="15.5" r="2" fill="#f1c40f"/><path d="M13 21L24 3" stroke="#d08a30" stroke-width="2.2"/><path d="M22.5 2L25 0.5L25.5 3.5Z" fill="#333"/></svg>
<svg style="left:400px;top:736px" width="26" height="26"><path d="M2 3L12 5L22 3V22L12 24L2 22Z" fill="#f7f7f7" stroke="#d0d0d0" stroke-width="0.8"/><path d="M12 5V24" stroke="#bbb"/><path d="M4 7L7 6M4 10H9M5 13L9 12M4 16H8" stroke="#e0322a" stroke-width="1.6"/><path d="M15 8H19M15 12H19M15 16H19M15 19H19" stroke="#333" stroke-width="1.4"/></svg>
<svg style="left:448px;top:736px" width="26" height="26"><circle cx="12" cy="12" r="11.3" fill="#db4437"/><path d="M12 12L21.8 17.65A11.3 11.3 0 0 1 2.2 17.65Z" fill="#0f9d58"/><path d="M12 12L2.2 17.65A11.3 11.3 0 0 1 12 0.7Z" fill="#db4437"/><path d="M12 12L12 0.7A11.3 11.3 0 0 1 21.8 17.65Z" fill="#f4b400"/><path d="M12 12L2.2 17.65A11.3 11.3 0 0 1 2.2 6.35L12 6.35Z" fill="#0f9d58" opacity="0"/><circle cx="12" cy="12" r="5.3" fill="#fff"/><circle cx="12" cy="12" r="4.2" fill="#4285f4"/></svg>
<svg style="left:497px;top:737px" width="28" height="24"><path d="M2 3H10L12 5.5H24V20H2Z" fill="#e2a92e"/><rect x="2" y="8" width="22" height="12" fill="#f6cd5a"/><rect x="9" y="13" width="8" height="7" fill="#2f8ee0"/><rect x="9" y="13" width="8" height="2" fill="#1f6fbf"/></svg>
<div style="left:493px;top:766px;width:33px;height:2px;background:#f2edb8"></div>
<svg style="left:547px;top:735px" width="26" height="26"><path d="M18 1L24 4V21L18 24L6 14L2 17L0.5 16V9L2 8L6 11ZM18 7.5L11 12.5L18 17.5Z" fill="#2489ca"/><path d="M18 1L24 4V21L18 24Z" fill="#1a6fb0" opacity="0.6"/></svg>
<div style="left:583px;top:728px;width:49px;height:40px;background:#525252"></div>
<svg style="left:594px;top:734px" width="28" height="26"><path d="M3 4L17 2L20 4V21L17 23L3 21Z" fill="#6cc24a"/><rect x="6" y="7" width="19" height="15" fill="#f2f7ee" stroke="#bcd8b0" stroke-width="0.7"/><path d="M15 7V22M20 7V22M6 12H25M6 17H25" stroke="#cfe3c6" stroke-width="0.8"/><rect x="16" y="9" width="3" height="2" fill="#2e8b3a"/><rect x="21" y="9" width="3" height="2" fill="#2e8b3a"/><rect x="16" y="13" width="3" height="3" fill="#2e8b3a"/><rect x="21" y="13" width="3" height="3" fill="#2e8b3a"/><rect x="16" y="18" width="3" height="3" fill="#2e8b3a"/><rect x="21" y="18" width="3" height="3" fill="#2e8b3a"/><path d="M7 9L13 17M13 9L7 17" stroke="#1f7a2c" stroke-width="2.4"/></svg>
<div style="left:583px;top:766px;width:49px;height:2px;background:#f2edb8"></div>
<svg style="left:982px;top:734px" width="26" height="26"><path d="M3 22L20 5" stroke="#2fa84f" stroke-width="2.5"/><path d="M14 4H21V11" fill="none" stroke="#2fa84f" stroke-width="2.5"/><rect x="3" y="19" width="3" height="4" fill="#2fa84f"/><rect x="8" y="16" width="3" height="7" fill="#2fa84f"/><rect x="13" y="13" width="3" height="10" fill="#2fa84f"/><rect x="18" y="10" width="3" height="13" fill="#2fa84f"/></svg>
<div style="left:1014px;top:738px;height:20px;line-height:20px;font-size:12.8px;color:#fff;-webkit-text-stroke:0.1px #fff">BSE smlcap</div>
<div style="left:1094px;top:738px;height:20px;line-height:20px;font-size:13px;color:#3fbf5a;-webkit-text-stroke:0.1px #3fbf5a">+1.74%</div>
<svg style="left:1164px;top:742px" width="14" height="10"><path d="M1.5 8.5L7 3L12.5 8.5" fill="none" stroke="#fff" stroke-width="1.5"/></svg>
<svg style="left:1186px;top:738px" width="20" height="18"><rect x="5" y="2" width="13" height="10" fill="none" stroke="#fff" stroke-width="1.3"/><rect x="1" y="5" width="5" height="9" fill="#3b3b3b" stroke="#fff" stroke-width="1.3"/><path d="M11 12V15M7 16H15" stroke="#fff" stroke-width="1.3"/></svg>
<div style="left:1212px;top:738px;height:20px;line-height:20px;font-size:11.6px;color:#fff;-webkit-text-stroke:0.1px #fff">ENG</div>
<div style="left:1246px;top:729px;width:60px;height:20px;line-height:20px;text-align:center;font-size:11.5px;color:#fff;-webkit-text-stroke:0.1px #fff">19:37</div>
<div style="left:1246px;top:747px;width:60px;height:20px;line-height:20px;text-align:center;font-size:11.5px;color:#fff;-webkit-text-stroke:0.1px #fff">07-01-2025</div>
<svg style="left:1320px;top:736px" width="34" height="30"><path d="M4 4H21V16H11L7 20V16H4Z" fill="#f4f4f4"/><path d="M7 8H18M7 11.5H18" stroke="#999" stroke-width="1.6"/><circle cx="20.4" cy="19.6" r="7.2" fill="#2a2a2a" stroke="#8a8a8a" stroke-width="1.2"/><text x="17" y="23.8" font-family="Liberation Sans" font-size="11" font-weight="bold" fill="#fff">4</text></svg>
<div style="left:1360px;top:728px;width:1px;height:40px;background:#6a6a6a"></div>
</div></body></html>
